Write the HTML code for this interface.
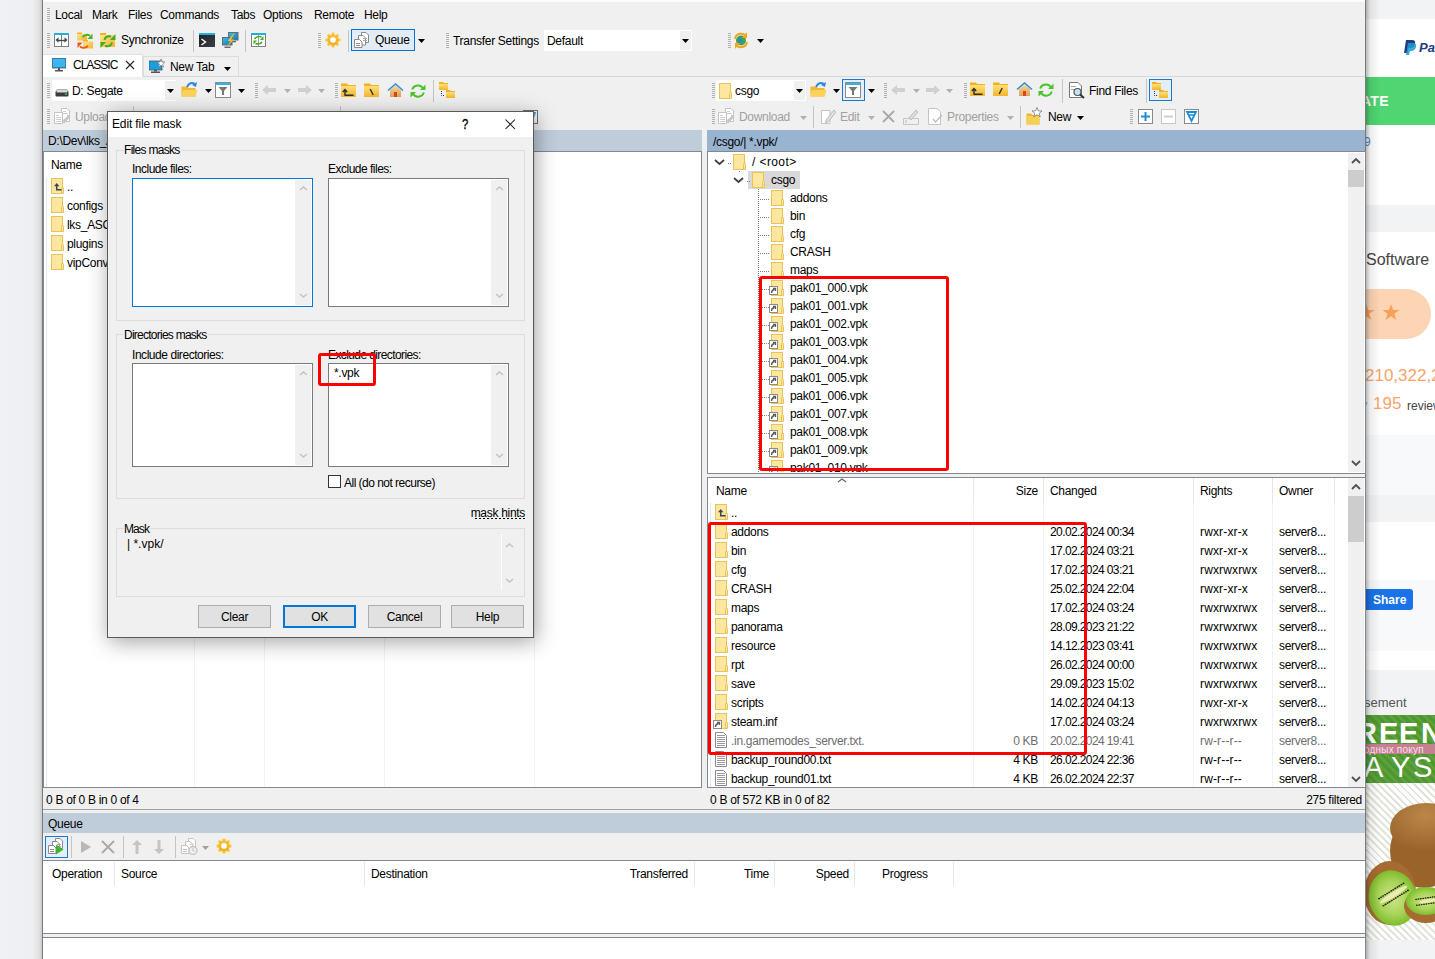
<!DOCTYPE html><html><head><meta charset="utf-8"><style>
html,body{margin:0;padding:0;}
body{width:1435px;height:959px;overflow:hidden;position:relative;background:#f0f1f3;font-family:"Liberation Sans",sans-serif;font-size:12px;color:#000;}
div{position:absolute;box-sizing:border-box;}
.t{white-space:nowrap;line-height:14px;letter-spacing:-0.3px;}
</style></head><body>
<div style="left:0px;top:0px;width:43px;height:959px;background:linear-gradient(to right,#eff1f4 0px,#edeff2 32px,#e0e1e3 39px,#c9c9ca 42px)"></div>
<div style="left:1366px;top:0px;width:69px;height:959px;background:#fff"></div>
<div style="left:1366px;top:0px;width:69px;height:19px;background:#f1f3f4"></div>
<div style="left:1366px;top:77px;width:69px;height:48px;background:#4fd571"></div>
<div class="t" style="left:1361px;top:94px;font-size:14px;color:#fff;font-weight:bold;letter-spacing:0.3px">ATE</div>
<svg style="position:absolute;left:1403px;top:38px;" width="32" height="18" viewBox="0 0 32 18"><path d="M3 2 H9 Q13 2 12 6 Q11 10 7 10 H5.5 L4.5 15 H1 Z" fill="#253b80"/><path d="M5 5 H10 Q14 5 13 9 Q12 13 8 13 H7 L6 17 H3 Z" fill="#179bd7" opacity="0.85"/><text x="16" y="14" font-family="Liberation Sans" font-weight="bold" font-style="italic" font-size="13" fill="#253b80">Pa</text></svg>
<div class="t" style="left:1364px;top:135px;font-size:12px;color:#4a7fd0">9</div>
<div style="left:1366px;top:205px;width:69px;height:27px;background:#f1f3f4"></div>
<div class="t" style="left:1366px;top:253px;font-size:16px;color:#444;letter-spacing:0">Software</div>
<div style="left:1330px;top:289px;width:101px;height:50px;background:#fdd5b5;border-radius:25px"></div>
<svg style="position:absolute;left:1358px;top:302px;" width="50" height="22" viewBox="0 0 50 22"><path d="M8 2 L10.2 8 H16.5 L11.4 11.8 L13.3 18 L8 14.2 L2.7 18 L4.6 11.8 L-0.5 8 H5.8 Z" fill="#f6a05a"/><path d="M33 2 L35.2 8 H41.5 L36.4 11.8 L38.3 18 L33 14.2 L27.7 18 L29.6 11.8 L24.5 8 H30.8 Z" fill="#f6a05a"/></svg>
<div class="t" style="left:1365px;top:369px;font-size:17px;color:#f5a46b;letter-spacing:0">210,322,2</div>
<div class="t" style="left:1365px;top:400px;font-size:12px;color:#999">&#8217;</div>
<div class="t" style="left:1373px;top:397px;font-size:17px;color:#f5a46b;letter-spacing:0">195</div>
<div class="t" style="left:1407px;top:399px;font-size:12px;color:#444;letter-spacing:0">review</div>
<div style="left:1366px;top:435px;width:69px;height:60px;background:#f8f9fa"></div>
<div style="left:1366px;top:495px;width:69px;height:27px;background:#f1f3f4"></div>
<div style="left:1366px;top:580px;width:69px;height:71px;background:#f8f9fa"></div>
<div style="left:1350px;top:589px;width:63px;height:21px;background:#1a73e8;border-radius:3px"></div>
<div class="t" style="left:1373px;top:593px;font-size:12px;color:#fff;font-weight:bold;letter-spacing:0">Share</div>
<div style="left:1366px;top:670px;width:69px;height:289px;background:#f1f3f4"></div>
<div class="t" style="left:1364px;top:696px;font-size:13px;color:#555;letter-spacing:0">sement</div>
<div style="left:1366px;top:715px;width:69px;height:68px;background:repeating-linear-gradient(45deg,#4f9630 0 3px,#5aa23a 3px 6px)"></div>
<div class="t" style="left:1356px;top:726px;font-size:29px;color:#fff;font-weight:bold;letter-spacing:0">R</div>
<div class="t" style="left:1379px;top:726px;font-size:29px;color:#fff;font-weight:bold;letter-spacing:0">E</div>
<div class="t" style="left:1399px;top:726px;font-size:29px;color:#fff;font-weight:bold;letter-spacing:0">E</div>
<div class="t" style="left:1421px;top:726px;font-size:29px;color:#fff;font-weight:bold;letter-spacing:0">N</div>
<div style="left:1366px;top:744px;width:69px;height:10px;background:#c97f93"></div>
<div class="t" style="left:1364px;top:743px;font-size:10px;color:#f6e3ea;letter-spacing:0.2px">одных покуп</div>
<div class="t" style="left:1364px;top:760px;font-size:29px;color:#fff;letter-spacing:0">A</div>
<div class="t" style="left:1391px;top:760px;font-size:29px;color:#fff;letter-spacing:0">Y</div>
<div class="t" style="left:1413px;top:760px;font-size:29px;color:#fff;letter-spacing:0">S</div>
<div style="left:1366px;top:783px;width:69px;height:157px;background:repeating-linear-gradient(45deg,#ffffff 0 3px,#e2e6da 3px 5px)"></div>
<svg style="position:absolute;left:1366px;top:783px;" width="69" height="157" viewBox="0 0 69 157"><defs><radialGradient id="kg" cx="0.5" cy="0.25" r="0.75"><stop offset="0" stop-color="#bb8748"/><stop offset="1" stop-color="#97622a"/></radialGradient><radialGradient id="kf" cx="0.5" cy="0.5" r="0.5"><stop offset="0" stop-color="#cfe58c"/><stop offset="0.6" stop-color="#a8d458"/><stop offset="1" stop-color="#7dbd2c"/></radialGradient></defs><ellipse cx="58" cy="68" rx="34" ry="37" fill="#9a6329"/><ellipse cx="60" cy="45" rx="36" ry="25" fill="url(#kg)"/><ellipse cx="24" cy="110" rx="26" ry="32" fill="#a56b31"/><ellipse cx="27" cy="115" rx="24" ry="28" transform="rotate(-15 27 115)" fill="url(#kf)"/><ellipse cx="13.1" cy="115.6" rx="1.1" ry="0.8" fill="#1e2410"/><ellipse cx="17.5" cy="122.7" rx="1.1" ry="0.8" fill="#1e2410"/><ellipse cx="15.1" cy="114.3" rx="1.1" ry="0.8" fill="#1e2410"/><ellipse cx="19.5" cy="121.4" rx="1.1" ry="0.8" fill="#1e2410"/><ellipse cx="17.1" cy="113.0" rx="1.1" ry="0.8" fill="#1e2410"/><ellipse cx="21.6" cy="120.1" rx="1.1" ry="0.8" fill="#1e2410"/><ellipse cx="19.2" cy="111.8" rx="1.1" ry="0.8" fill="#1e2410"/><ellipse cx="23.6" cy="118.9" rx="1.1" ry="0.8" fill="#1e2410"/><ellipse cx="21.2" cy="110.5" rx="1.1" ry="0.8" fill="#1e2410"/><ellipse cx="25.7" cy="117.6" rx="1.1" ry="0.8" fill="#1e2410"/><ellipse cx="23.2" cy="109.2" rx="1.1" ry="0.8" fill="#1e2410"/><ellipse cx="27.7" cy="116.3" rx="1.1" ry="0.8" fill="#1e2410"/><ellipse cx="25.3" cy="107.9" rx="1.1" ry="0.8" fill="#1e2410"/><ellipse cx="29.7" cy="115.1" rx="1.1" ry="0.8" fill="#1e2410"/><ellipse cx="27.3" cy="106.7" rx="1.1" ry="0.8" fill="#1e2410"/><ellipse cx="31.8" cy="113.8" rx="1.1" ry="0.8" fill="#1e2410"/><ellipse cx="29.3" cy="105.4" rx="1.1" ry="0.8" fill="#1e2410"/><ellipse cx="33.8" cy="112.5" rx="1.1" ry="0.8" fill="#1e2410"/><ellipse cx="31.4" cy="104.1" rx="1.1" ry="0.8" fill="#1e2410"/><ellipse cx="35.8" cy="111.2" rx="1.1" ry="0.8" fill="#1e2410"/><ellipse cx="33.4" cy="102.9" rx="1.1" ry="0.8" fill="#1e2410"/><ellipse cx="37.9" cy="110.0" rx="1.1" ry="0.8" fill="#1e2410"/><ellipse cx="35.5" cy="101.6" rx="1.1" ry="0.8" fill="#1e2410"/><ellipse cx="39.9" cy="108.7" rx="1.1" ry="0.8" fill="#1e2410"/><ellipse cx="37.5" cy="100.3" rx="1.1" ry="0.8" fill="#1e2410"/><ellipse cx="41.9" cy="107.4" rx="1.1" ry="0.8" fill="#1e2410"/><ellipse cx="27.5" cy="111.5" rx="16" ry="2.4" transform="rotate(-32 27.5 111.5)" fill="#ecebb2"/><ellipse cx="60" cy="123" rx="22" ry="17" fill="#a56b31"/><ellipse cx="60" cy="118" rx="20" ry="14" fill="url(#kf)"/><ellipse cx="50.1" cy="116.4" rx="1" ry="0.7" fill="#1e2410"/><ellipse cx="50.9" cy="122.3" rx="1" ry="0.7" fill="#1e2410"/><ellipse cx="52.5" cy="116.0" rx="1" ry="0.7" fill="#1e2410"/><ellipse cx="53.3" cy="122.0" rx="1" ry="0.7" fill="#1e2410"/><ellipse cx="54.8" cy="115.7" rx="1" ry="0.7" fill="#1e2410"/><ellipse cx="55.7" cy="121.6" rx="1" ry="0.7" fill="#1e2410"/><ellipse cx="57.2" cy="115.4" rx="1" ry="0.7" fill="#1e2410"/><ellipse cx="58.0" cy="121.3" rx="1" ry="0.7" fill="#1e2410"/><ellipse cx="59.6" cy="115.0" rx="1" ry="0.7" fill="#1e2410"/><ellipse cx="60.4" cy="121.0" rx="1" ry="0.7" fill="#1e2410"/><ellipse cx="62.0" cy="114.7" rx="1" ry="0.7" fill="#1e2410"/><ellipse cx="62.8" cy="120.6" rx="1" ry="0.7" fill="#1e2410"/><ellipse cx="64.3" cy="114.4" rx="1" ry="0.7" fill="#1e2410"/><ellipse cx="65.2" cy="120.3" rx="1" ry="0.7" fill="#1e2410"/><ellipse cx="66.7" cy="114.0" rx="1" ry="0.7" fill="#1e2410"/><ellipse cx="67.5" cy="120.0" rx="1" ry="0.7" fill="#1e2410"/><ellipse cx="69.1" cy="113.7" rx="1" ry="0.7" fill="#1e2410"/><ellipse cx="69.9" cy="119.6" rx="1" ry="0.7" fill="#1e2410"/><ellipse cx="62" cy="118" rx="9" ry="1.8" transform="rotate(-8 62 118)" fill="#ecebb2"/></svg>
<div style="left:1366px;top:0px;width:14px;height:959px;background:linear-gradient(to right,rgba(0,0,0,0.28),rgba(0,0,0,0.08) 4px,rgba(0,0,0,0) 14px)"></div>
<div style="left:42px;top:0px;width:1324px;height:959px;background:#f0f0f0;border-left:1px solid #7a7a7a;border-right:1px solid #7a7a7a"></div>
<div style="left:43px;top:0px;width:1322px;height:2px;background:#fcfcfc"></div>
<svg style="position:absolute;left:47px;top:8px;" width="3" height="13" viewBox="0 0 3 13"><rect x="0" y="0" width="3" height="1" fill="#b0b0b0"/><rect x="0" y="2" width="3" height="1" fill="#b0b0b0"/><rect x="0" y="4" width="3" height="1" fill="#b0b0b0"/><rect x="0" y="6" width="3" height="1" fill="#b0b0b0"/><rect x="0" y="8" width="3" height="1" fill="#b0b0b0"/><rect x="0" y="10" width="3" height="1" fill="#b0b0b0"/><rect x="0" y="12" width="3" height="1" fill="#b0b0b0"/></svg>
<div class="t" style="left:55px;top:8px;font-size:12px;">Local</div>
<div class="t" style="left:92px;top:8px;font-size:12px;">Mark</div>
<div class="t" style="left:128px;top:8px;font-size:12px;">Files</div>
<div class="t" style="left:160px;top:8px;font-size:12px;">Commands</div>
<div class="t" style="left:231px;top:8px;font-size:12px;">Tabs</div>
<div class="t" style="left:263px;top:8px;font-size:12px;">Options</div>
<div class="t" style="left:314px;top:8px;font-size:12px;">Remote</div>
<div class="t" style="left:364px;top:8px;font-size:12px;">Help</div>
<svg style="position:absolute;left:47px;top:33px;" width="3" height="15" viewBox="0 0 3 15"><rect x="0" y="0" width="3" height="1" fill="#b0b0b0"/><rect x="0" y="2" width="3" height="1" fill="#b0b0b0"/><rect x="0" y="4" width="3" height="1" fill="#b0b0b0"/><rect x="0" y="6" width="3" height="1" fill="#b0b0b0"/><rect x="0" y="8" width="3" height="1" fill="#b0b0b0"/><rect x="0" y="10" width="3" height="1" fill="#b0b0b0"/><rect x="0" y="12" width="3" height="1" fill="#b0b0b0"/><rect x="0" y="14" width="3" height="1" fill="#b0b0b0"/></svg>
<svg style="position:absolute;left:54px;top:33px;" width="15" height="14" viewBox="0 0 15 14"><rect x="0.5" y="0.5" width="14" height="13" fill="#fff" stroke="#808080"/><rect x="0" y="0" width="15" height="2" fill="#1fb0de"/><line x1="7.5" y1="2" x2="7.5" y2="13" stroke="#808080"/><path d="M1.5 7 L4.5 4.3 V9.7 Z M13.5 7 L10.5 4.3 V9.7 Z" fill="#3f4850"/><line x1="4" y1="7.5" x2="11" y2="7.5" stroke="#3f4850" stroke-width="1.4"/></svg>
<svg style="position:absolute;left:77px;top:32px;" width="16" height="17" viewBox="0 0 16 17"><defs><linearGradient id="sf" x1="0" y1="0" x2="1" y2="1"><stop offset="0" stop-color="#fde49a"/><stop offset="1" stop-color="#f3b42a"/></linearGradient></defs><rect x="0" y="0.5" width="5" height="2" fill="#f5b519"/><rect x="0" y="2" width="10" height="6.5" fill="url(#sf)"/><rect x="6" y="8" width="5" height="2" fill="#f5b519"/><rect x="6" y="9.5" width="10" height="7" fill="url(#sf)"/><path d="M5.5 5 Q9 1.5 13 3.5" stroke="#4bb021" stroke-width="1.8" fill="none"/><path d="M15.5 1.5 V7 H10.5 Z" fill="#4bb021"/><path d="M11 14 Q7 17.5 3 14.5" stroke="#e8571c" stroke-width="1.8" fill="none"/><path d="M0.5 16 V10.5 H5.5 Z" fill="#e8571c"/></svg>
<svg style="position:absolute;left:100px;top:32px;" width="16" height="17" viewBox="0 0 16 17"><defs><linearGradient id="sy" x1="0" y1="0" x2="1" y2="1"><stop offset="0" stop-color="#fde49a"/><stop offset="1" stop-color="#f3b42a"/></linearGradient></defs><rect x="0" y="1" width="6" height="2" fill="#f5b519"/><rect x="0" y="3" width="15" height="12" fill="url(#sy)"/><path d="M4.5 8 Q5.5 3.5 11 4.5" stroke="#47ad1d" stroke-width="2" fill="none"/><path d="M15.5 2 V8 H10 Z" fill="#47ad1d"/><path d="M12 10.5 Q11 15 5 14" stroke="#47ad1d" stroke-width="2" fill="none"/><path d="M0.5 16 V10 H6 Z" fill="#47ad1d"/></svg>
<div class="t" style="left:121px;top:33px;font-size:12px;">Synchronize</div>
<div style="left:193px;top:30px;width:1px;height:22px;background:#c4c4c4"></div>
<svg style="position:absolute;left:199px;top:33px;" width="16" height="14" viewBox="0 0 16 14"><defs><linearGradient id="tg" x1="0" y1="0" x2="1" y2="1"><stop offset="0" stop-color="#1d1f22"/><stop offset="1" stop-color="#3c4046"/></linearGradient></defs><rect x="0" y="0" width="16" height="14" fill="url(#tg)"/><rect x="0" y="0" width="16" height="2" fill="#1fb0de"/><path d="M2.5 6 L6.5 9 L2.5 12" stroke="#fff" stroke-width="1.4" fill="none"/></svg>
<svg style="position:absolute;left:222px;top:32px;" width="17" height="17" viewBox="0 0 17 17"><defs><linearGradient id="pg" x1="0" y1="0" x2="1" y2="1"><stop offset="0" stop-color="#2fc0ee"/><stop offset="1" stop-color="#1577c2"/></linearGradient></defs><rect x="6.5" y="0.5" width="9.5" height="7.5" fill="url(#pg)" stroke="#6a6a6a"/><rect x="9" y="9" width="5" height="1.3" fill="#6a6a6a"/><rect x="0.5" y="5.5" width="9.5" height="7.5" fill="url(#pg)" stroke="#6a6a6a"/><rect x="2.5" y="14.5" width="6" height="1.5" fill="#6a6a6a"/><path d="M11.5 1.5 L5.5 9 H8.5 L4.5 15.5 L12 7.5 H9 L12.5 1.5 Z" fill="#f9be2c"/></svg>
<div style="left:245px;top:30px;width:1px;height:22px;background:#c4c4c4"></div>
<svg style="position:absolute;left:251px;top:33px;" width="15" height="14" viewBox="0 0 15 14"><rect x="0.5" y="0.5" width="14" height="13" fill="#fff" stroke="#808080"/><rect x="0" y="0" width="15" height="2" fill="#1fb0de"/><line x1="7.5" y1="2" x2="7.5" y2="13" stroke="#a0a0a0"/><path d="M3.5 6 Q6 2.5 10.5 4" stroke="#43ad1f" stroke-width="1.5" fill="none"/><path d="M12.5 3 V7 H9 Z" fill="#43ad1f"/><path d="M11 9 Q9 12 4.5 10.5" stroke="#43ad1f" stroke-width="1.5" fill="none"/><path d="M2.5 11.5 V7.5 H6 Z" fill="#43ad1f"/></svg>
<svg style="position:absolute;left:318px;top:33px;" width="3" height="15" viewBox="0 0 3 15"><rect x="0" y="0" width="3" height="1" fill="#b0b0b0"/><rect x="0" y="2" width="3" height="1" fill="#b0b0b0"/><rect x="0" y="4" width="3" height="1" fill="#b0b0b0"/><rect x="0" y="6" width="3" height="1" fill="#b0b0b0"/><rect x="0" y="8" width="3" height="1" fill="#b0b0b0"/><rect x="0" y="10" width="3" height="1" fill="#b0b0b0"/><rect x="0" y="12" width="3" height="1" fill="#b0b0b0"/><rect x="0" y="14" width="3" height="1" fill="#b0b0b0"/></svg>
<svg style="position:absolute;left:325px;top:32px;" width="16" height="16" viewBox="0 0 16 16"><defs><linearGradient id="gg" x1="0" y1="0" x2="0" y2="1"><stop offset="0" stop-color="#fcd45a"/><stop offset="1" stop-color="#eeaa1c"/></linearGradient></defs><g fill="url(#gg)"><circle cx="8" cy="8" r="5.6"/><rect x="6.5" y="0.3" width="3" height="4" rx="1" transform="rotate(0 8 8)"/><rect x="6.5" y="0.3" width="3" height="4" rx="1" transform="rotate(45 8 8)"/><rect x="6.5" y="0.3" width="3" height="4" rx="1" transform="rotate(90 8 8)"/><rect x="6.5" y="0.3" width="3" height="4" rx="1" transform="rotate(135 8 8)"/><rect x="6.5" y="0.3" width="3" height="4" rx="1" transform="rotate(180 8 8)"/><rect x="6.5" y="0.3" width="3" height="4" rx="1" transform="rotate(225 8 8)"/><rect x="6.5" y="0.3" width="3" height="4" rx="1" transform="rotate(270 8 8)"/><rect x="6.5" y="0.3" width="3" height="4" rx="1" transform="rotate(315 8 8)"/></g><circle cx="8" cy="8" r="2.8" fill="#fff"/></svg>
<div style="left:348px;top:30px;width:1px;height:22px;background:#c4c4c4"></div>
<div style="left:351px;top:29px;width:64px;height:22px;background:#e1ecf7;border:1px solid #0a74d0"></div>
<svg style="position:absolute;left:354px;top:32px;" width="15" height="16" viewBox="0 0 15 16"><path d="M7.5 0.5 H12 L14.5 3 V10.5 H7.5 Z" fill="#fff" stroke="#8a8a8a"/><path d="M4.5 3.5 H9 L11.5 6 V13 H4.5 Z" fill="#fff" stroke="#8a8a8a"/><path d="M0.5 7.5 H5.5 L8 10 V15.5 H0.5 Z" fill="#fff" stroke="#8a8a8a"/><line x1="2" y1="11.5" x2="6" y2="11.5" stroke="#8a8a8a"/><line x1="2" y1="13.5" x2="6" y2="13.5" stroke="#8a8a8a"/><line x1="9" y1="6.5" x2="13" y2="6.5" stroke="#aaa"/><line x1="9" y1="8.5" x2="13" y2="8.5" stroke="#aaa"/></svg>
<div class="t" style="left:375px;top:33px;font-size:12px;">Queue</div>
<svg style="position:absolute;left:418px;top:39px;" width="7" height="4" viewBox="0 0 7 4"><path d="M0 0 H7 L3.5 4 Z" fill="#000"/></svg>
<svg style="position:absolute;left:446px;top:33px;" width="3" height="15" viewBox="0 0 3 15"><rect x="0" y="0" width="3" height="1" fill="#b0b0b0"/><rect x="0" y="2" width="3" height="1" fill="#b0b0b0"/><rect x="0" y="4" width="3" height="1" fill="#b0b0b0"/><rect x="0" y="6" width="3" height="1" fill="#b0b0b0"/><rect x="0" y="8" width="3" height="1" fill="#b0b0b0"/><rect x="0" y="10" width="3" height="1" fill="#b0b0b0"/><rect x="0" y="12" width="3" height="1" fill="#b0b0b0"/><rect x="0" y="14" width="3" height="1" fill="#b0b0b0"/></svg>
<div class="t" style="left:453px;top:34px;font-size:12px;">Transfer Settings</div>
<div style="left:544px;top:30px;width:148px;height:21px;background:#fff"></div>
<div style="left:680px;top:31px;width:11px;height:19px;background:#f0f0f0"></div>
<div class="t" style="left:547px;top:34px;font-size:12px;">Default</div>
<svg style="position:absolute;left:682px;top:39px;" width="7" height="4" viewBox="0 0 7 4"><path d="M0 0 H7 L3.5 4 Z" fill="#000"/></svg>
<svg style="position:absolute;left:728px;top:33px;" width="3" height="15" viewBox="0 0 3 15"><rect x="0" y="0" width="3" height="1" fill="#b0b0b0"/><rect x="0" y="2" width="3" height="1" fill="#b0b0b0"/><rect x="0" y="4" width="3" height="1" fill="#b0b0b0"/><rect x="0" y="6" width="3" height="1" fill="#b0b0b0"/><rect x="0" y="8" width="3" height="1" fill="#b0b0b0"/><rect x="0" y="10" width="3" height="1" fill="#b0b0b0"/><rect x="0" y="12" width="3" height="1" fill="#b0b0b0"/><rect x="0" y="14" width="3" height="1" fill="#b0b0b0"/></svg>
<svg style="position:absolute;left:733px;top:32px;" width="16" height="17" viewBox="0 0 16 17"><circle cx="8" cy="8.5" r="5" fill="#3aa55a"/><path d="M5 6 Q7 5 8 7 Q10 9 8 11 Q6 11 5 9 Z" fill="#2f7ed8" opacity="0.8"/><path d="M2 7 Q3 1 10 2 L12 3" stroke="#f3a617" stroke-width="2" fill="none"/><path d="M14 0 V6 H9 Z" fill="#f3a617"/><path d="M14 10 Q13 16 6 15 L4 14" stroke="#f3a617" stroke-width="2" fill="none"/><path d="M2 17 V11 H7 Z" fill="#f3a617"/></svg>
<svg style="position:absolute;left:757px;top:39px;" width="7" height="4" viewBox="0 0 7 4"><path d="M0 0 H7 L3.5 4 Z" fill="#000"/></svg>
<div style="left:43px;top:54px;width:100px;height:23px;background:#fff;border-top:1px solid #e0e0e0;border-right:1px solid #e0e0e0"></div>
<svg style="position:absolute;left:52px;top:58px;" width="14" height="14" viewBox="0 0 14 14"><rect x="0" y="0" width="14" height="10" fill="#1a9ee2" stroke="#555" stroke-width="0.8"/><rect x="1" y="1" width="12" height="8" fill="#3fb5ef"/><rect x="6" y="10" width="2" height="2" fill="#555"/><rect x="3" y="12" width="8" height="1.5" fill="#555"/></svg>
<div class="t" style="left:73px;top:58px;font-size:12px;letter-spacing:-1px">CLASSIC</div>
<svg style="position:absolute;left:125px;top:60px;" width="10" height="10" viewBox="0 0 10 10"><path d="M1 1 L9 9 M9 1 L1 9" stroke="#222" stroke-width="1.1"/></svg>
<div style="left:143px;top:56px;width:96px;height:21px;background:#f0f0f0;border:1px solid #dcdcdc;border-bottom:none"></div>
<svg style="position:absolute;left:149px;top:59px;" width="16" height="14" viewBox="0 0 16 14"><rect x="0" y="2" width="13" height="9" fill="#1a9ee2" stroke="#555" stroke-width="0.8"/><rect x="5" y="11" width="3" height="1.5" fill="#555"/><rect x="2" y="12.5" width="9" height="1.5" fill="#555"/><path d="M12 0 L13 3 L16 3 L13.6 5 L14.6 8 L12 6.3 L9.4 8 L10.4 5 L8 3 L11 3 Z" fill="#fff" stroke="#777" stroke-width="0.7"/></svg>
<div class="t" style="left:170px;top:60px;font-size:12px;">New Tab</div>
<svg style="position:absolute;left:224px;top:67px;" width="7" height="4" viewBox="0 0 7 4"><path d="M0 0 H7 L3.5 4 Z" fill="#000"/></svg>
<div style="left:143px;top:76px;width:1222px;height:1px;background:#d6d6d6"></div>
<svg style="position:absolute;left:47px;top:83px;" width="3" height="15" viewBox="0 0 3 15"><rect x="0" y="0" width="3" height="1" fill="#b0b0b0"/><rect x="0" y="2" width="3" height="1" fill="#b0b0b0"/><rect x="0" y="4" width="3" height="1" fill="#b0b0b0"/><rect x="0" y="6" width="3" height="1" fill="#b0b0b0"/><rect x="0" y="8" width="3" height="1" fill="#b0b0b0"/><rect x="0" y="10" width="3" height="1" fill="#b0b0b0"/><rect x="0" y="12" width="3" height="1" fill="#b0b0b0"/><rect x="0" y="14" width="3" height="1" fill="#b0b0b0"/></svg>
<div style="left:52px;top:80px;width:124px;height:21px;background:#fff"></div>
<div style="left:165px;top:81px;width:11px;height:19px;background:#f0f0f0"></div>
<svg style="position:absolute;left:55px;top:89px;" width="14" height="8" viewBox="0 0 14 8"><rect x="0.5" y="2" width="13" height="5.5" rx="1" fill="#3b3b3b"/><rect x="1.5" y="0.5" width="11" height="3" rx="1" fill="#d8d8d8" stroke="#888" stroke-width="0.6"/><rect x="10" y="4.5" width="2" height="1.3" fill="#3ed36b"/></svg>
<div class="t" style="left:72px;top:84px;font-size:12px;">D: Segate</div>
<svg style="position:absolute;left:167px;top:89px;" width="7" height="4" viewBox="0 0 7 4"><path d="M0 0 H7 L3.5 4 Z" fill="#000"/></svg>
<svg style="position:absolute;left:181px;top:81px;" width="17" height="17" viewBox="0 0 17 17"><path d="M0.5 5.5 H6 L7.5 7 H14.5 V15.5 H0.5 Z" fill="#f2b632"/><path d="M2 9 H16.5 L14.5 15.5 H0.5 Z" fill="#f9d35c"/><path d="M6 6 Q9 0 14 3" stroke="#2a8ad6" stroke-width="2" fill="none"/><path d="M16 1 L15 6 L11 4 Z" fill="#2a8ad6"/></svg>
<svg style="position:absolute;left:205px;top:89px;" width="7" height="4" viewBox="0 0 7 4"><path d="M0 0 H7 L3.5 4 Z" fill="#000"/></svg>
<svg style="position:absolute;left:215px;top:82px;" width="17" height="16" viewBox="0 0 17 16"><rect x="0.5" y="0.5" width="15" height="15" fill="#fff" stroke="#8a8a8a"/><rect x="1" y="1" width="14" height="2" fill="#29b6e8"/><path d="M3.5 5 H12.5 L9 9 V13 L7 13 V9 Z" fill="#777"/></svg>
<svg style="position:absolute;left:238px;top:89px;" width="7" height="4" viewBox="0 0 7 4"><path d="M0 0 H7 L3.5 4 Z" fill="#000"/></svg>
<svg style="position:absolute;left:255px;top:83px;" width="3" height="15" viewBox="0 0 3 15"><rect x="0" y="0" width="3" height="1" fill="#b0b0b0"/><rect x="0" y="2" width="3" height="1" fill="#b0b0b0"/><rect x="0" y="4" width="3" height="1" fill="#b0b0b0"/><rect x="0" y="6" width="3" height="1" fill="#b0b0b0"/><rect x="0" y="8" width="3" height="1" fill="#b0b0b0"/><rect x="0" y="10" width="3" height="1" fill="#b0b0b0"/><rect x="0" y="12" width="3" height="1" fill="#b0b0b0"/><rect x="0" y="14" width="3" height="1" fill="#b0b0b0"/></svg>
<svg style="position:absolute;left:262px;top:84px;" width="15" height="12" viewBox="0 0 15 12"><path d="M0 6 L6 1 V4 H14 V8 H6 V11 Z" fill="#d0d0d0"/></svg>
<svg style="position:absolute;left:284px;top:89px;" width="7" height="4" viewBox="0 0 7 4"><path d="M0 0 H7 L3.5 4 Z" fill="#b0b0b0"/></svg>
<svg style="position:absolute;left:297px;top:84px;" width="15" height="12" viewBox="0 0 15 12"><path d="M15 6 L9 1 V4 H1 V8 H9 V11 Z" fill="#d0d0d0"/></svg>
<svg style="position:absolute;left:318px;top:89px;" width="7" height="4" viewBox="0 0 7 4"><path d="M0 0 H7 L3.5 4 Z" fill="#b0b0b0"/></svg>
<svg style="position:absolute;left:335px;top:83px;" width="3" height="15" viewBox="0 0 3 15"><rect x="0" y="0" width="3" height="1" fill="#b0b0b0"/><rect x="0" y="2" width="3" height="1" fill="#b0b0b0"/><rect x="0" y="4" width="3" height="1" fill="#b0b0b0"/><rect x="0" y="6" width="3" height="1" fill="#b0b0b0"/><rect x="0" y="8" width="3" height="1" fill="#b0b0b0"/><rect x="0" y="10" width="3" height="1" fill="#b0b0b0"/><rect x="0" y="12" width="3" height="1" fill="#b0b0b0"/><rect x="0" y="14" width="3" height="1" fill="#b0b0b0"/></svg>
<svg style="position:absolute;left:341px;top:83px;" width="16" height="15" viewBox="0 0 16 15"><defs><linearGradient id="fg1" x1="0" y1="0" x2="0" y2="1"><stop offset="0" stop-color="#fde07a"/><stop offset="1" stop-color="#f3b52c"/></linearGradient></defs><path d="M0 0.5 H6 L7 2 H15 V14 H0 Z" fill="#f2b11f"/><rect x="0" y="3" width="15" height="11" fill="url(#fg1)"/><path d="M4 12.5 V7 M1.8 9 L4 6.5 L6.2 9 M3.5 12.3 H12.5" stroke="#2d2d2d" stroke-width="1.4" fill="none"/></svg>
<svg style="position:absolute;left:364px;top:83px;" width="16" height="15" viewBox="0 0 16 15"><defs><linearGradient id="fg2" x1="0" y1="0" x2="0" y2="1"><stop offset="0" stop-color="#fde07a"/><stop offset="1" stop-color="#f3b52c"/></linearGradient></defs><path d="M0 0.5 H6 L7 2 H15 V14 H0 Z" fill="#f2b11f"/><rect x="0" y="3" width="15" height="11" fill="url(#fg2)"/><path d="M6.2 6 L9.2 12" stroke="#2d2d2d" stroke-width="1.4"/></svg>
<svg style="position:absolute;left:387px;top:83px;" width="17" height="15" viewBox="0 0 17 15"><defs><linearGradient id="hg" x1="0" y1="0" x2="0" y2="1"><stop offset="0" stop-color="#f6d49a"/><stop offset="1" stop-color="#d9a45a"/></linearGradient></defs><path d="M3 7 L8.5 2.5 L14 7 V14 H3 Z" fill="url(#hg)"/><path d="M1 7.5 L8.5 1 L16 7.5" stroke="#3a8fd0" stroke-width="1.6" fill="none"/><rect x="7" y="9" width="3" height="5" fill="#e0401a"/></svg>
<svg style="position:absolute;left:410px;top:83px;" width="16" height="16" viewBox="0 0 16 16"><path d="M13 5.5 A6 6 0 0 0 2.2 6.5 M2.8 10.5 A6 6 0 0 0 13.8 9.5" stroke="#4cc22c" stroke-width="2" fill="none"/><path d="M15.5 1.5 V7 H10 Z M0.5 14.5 V9 H6 Z" fill="#4cc22c"/></svg>
<div style="left:433px;top:80px;width:1px;height:22px;background:#c4c4c4"></div>
<svg style="position:absolute;left:439px;top:82px;" width="17" height="16" viewBox="0 0 17 16"><defs><linearGradient id="fg3" x1="0" y1="0" x2="0" y2="1"><stop offset="0" stop-color="#fde07a"/><stop offset="1" stop-color="#f3b52c"/></linearGradient></defs><defs><linearGradient id="fg4" x1="0" y1="0" x2="0" y2="1"><stop offset="0" stop-color="#fde07a"/><stop offset="1" stop-color="#f3b52c"/></linearGradient></defs><path d="M0 0 H4 L5 1 H9 V8 H0 Z" fill="#f2b11f"/><rect x="0" y="2" width="9" height="6" fill="url(#fg3)"/><path d="M7 8 H11 L12 9 H16 V16 H7 Z" fill="#f2b11f"/><rect x="7" y="10" width="9" height="6" fill="url(#fg4)"/><path d="M2.5 9 V13.5 H6" stroke="#333" stroke-dasharray="1 1" fill="none"/></svg>
<svg style="position:absolute;left:712px;top:83px;" width="3" height="15" viewBox="0 0 3 15"><rect x="0" y="0" width="3" height="1" fill="#b0b0b0"/><rect x="0" y="2" width="3" height="1" fill="#b0b0b0"/><rect x="0" y="4" width="3" height="1" fill="#b0b0b0"/><rect x="0" y="6" width="3" height="1" fill="#b0b0b0"/><rect x="0" y="8" width="3" height="1" fill="#b0b0b0"/><rect x="0" y="10" width="3" height="1" fill="#b0b0b0"/><rect x="0" y="12" width="3" height="1" fill="#b0b0b0"/><rect x="0" y="14" width="3" height="1" fill="#b0b0b0"/></svg>
<div style="left:716px;top:80px;width:90px;height:21px;background:#fff"></div>
<div style="left:794px;top:81px;width:11px;height:19px;background:#f0f0f0"></div>
<svg style="position:absolute;left:719px;top:83px;" width="15" height="16" viewBox="0 0 15 16"><rect x="0.5" y="0.5" width="11" height="15" fill="#fde79f" stroke="#e8c35a"/><path d="M10.5 15.5 V10.5 Q10.5 9 11.5 9 Q12.5 9 12.5 10.5 V15.5 Z" fill="#fde79f" stroke="#e8c35a"/></svg>
<div class="t" style="left:735px;top:84px;font-size:12px;">csgo</div>
<svg style="position:absolute;left:796px;top:89px;" width="7" height="4" viewBox="0 0 7 4"><path d="M0 0 H7 L3.5 4 Z" fill="#000"/></svg>
<svg style="position:absolute;left:810px;top:81px;" width="17" height="17" viewBox="0 0 17 17"><path d="M0.5 5.5 H6 L7.5 7 H14.5 V15.5 H0.5 Z" fill="#f2b632"/><path d="M2 9 H16.5 L14.5 15.5 H0.5 Z" fill="#f9d35c"/><path d="M6 6 Q9 0 14 3" stroke="#2a8ad6" stroke-width="2" fill="none"/><path d="M16 1 L15 6 L11 4 Z" fill="#2a8ad6"/></svg>
<svg style="position:absolute;left:833px;top:89px;" width="7" height="4" viewBox="0 0 7 4"><path d="M0 0 H7 L3.5 4 Z" fill="#000"/></svg>
<div style="left:842px;top:79px;width:23px;height:22px;background:#e3eef9;border:1px solid #1979ca"></div>
<svg style="position:absolute;left:845px;top:82px;" width="17" height="16" viewBox="0 0 17 16"><rect x="0.5" y="0.5" width="15" height="15" fill="#fff" stroke="#8a8a8a"/><rect x="1" y="1" width="14" height="2" fill="#29b6e8"/><path d="M3.5 5 H12.5 L9 9 V13 L7 13 V9 Z" fill="#777"/></svg>
<svg style="position:absolute;left:868px;top:89px;" width="7" height="4" viewBox="0 0 7 4"><path d="M0 0 H7 L3.5 4 Z" fill="#000"/></svg>
<svg style="position:absolute;left:884px;top:83px;" width="3" height="15" viewBox="0 0 3 15"><rect x="0" y="0" width="3" height="1" fill="#b0b0b0"/><rect x="0" y="2" width="3" height="1" fill="#b0b0b0"/><rect x="0" y="4" width="3" height="1" fill="#b0b0b0"/><rect x="0" y="6" width="3" height="1" fill="#b0b0b0"/><rect x="0" y="8" width="3" height="1" fill="#b0b0b0"/><rect x="0" y="10" width="3" height="1" fill="#b0b0b0"/><rect x="0" y="12" width="3" height="1" fill="#b0b0b0"/><rect x="0" y="14" width="3" height="1" fill="#b0b0b0"/></svg>
<svg style="position:absolute;left:891px;top:84px;" width="15" height="12" viewBox="0 0 15 12"><path d="M0 6 L6 1 V4 H14 V8 H6 V11 Z" fill="#d0d0d0"/></svg>
<svg style="position:absolute;left:913px;top:89px;" width="7" height="4" viewBox="0 0 7 4"><path d="M0 0 H7 L3.5 4 Z" fill="#b0b0b0"/></svg>
<svg style="position:absolute;left:925px;top:84px;" width="15" height="12" viewBox="0 0 15 12"><path d="M15 6 L9 1 V4 H1 V8 H9 V11 Z" fill="#d0d0d0"/></svg>
<svg style="position:absolute;left:946px;top:89px;" width="7" height="4" viewBox="0 0 7 4"><path d="M0 0 H7 L3.5 4 Z" fill="#b0b0b0"/></svg>
<svg style="position:absolute;left:964px;top:83px;" width="3" height="15" viewBox="0 0 3 15"><rect x="0" y="0" width="3" height="1" fill="#b0b0b0"/><rect x="0" y="2" width="3" height="1" fill="#b0b0b0"/><rect x="0" y="4" width="3" height="1" fill="#b0b0b0"/><rect x="0" y="6" width="3" height="1" fill="#b0b0b0"/><rect x="0" y="8" width="3" height="1" fill="#b0b0b0"/><rect x="0" y="10" width="3" height="1" fill="#b0b0b0"/><rect x="0" y="12" width="3" height="1" fill="#b0b0b0"/><rect x="0" y="14" width="3" height="1" fill="#b0b0b0"/></svg>
<svg style="position:absolute;left:970px;top:82px;" width="16" height="15" viewBox="0 0 16 15"><defs><linearGradient id="fg5" x1="0" y1="0" x2="0" y2="1"><stop offset="0" stop-color="#fde07a"/><stop offset="1" stop-color="#f3b52c"/></linearGradient></defs><path d="M0 0.5 H6 L7 2 H15 V14 H0 Z" fill="#f2b11f"/><rect x="0" y="3" width="15" height="11" fill="url(#fg5)"/><path d="M4 12.5 V7 M1.8 9 L4 6.5 L6.2 9 M3.5 12.3 H12.5" stroke="#2d2d2d" stroke-width="1.4" fill="none"/></svg>
<svg style="position:absolute;left:993px;top:82px;" width="16" height="15" viewBox="0 0 16 15"><defs><linearGradient id="fg6" x1="0" y1="0" x2="0" y2="1"><stop offset="0" stop-color="#fde07a"/><stop offset="1" stop-color="#f3b52c"/></linearGradient></defs><path d="M0 0.5 H6 L7 2 H15 V14 H0 Z" fill="#f2b11f"/><rect x="0" y="3" width="15" height="11" fill="url(#fg6)"/><path d="M9.2 6 L6.2 12" stroke="#2d2d2d" stroke-width="1.4"/></svg>
<svg style="position:absolute;left:1016px;top:82px;" width="17" height="15" viewBox="0 0 17 15"><defs><linearGradient id="hg" x1="0" y1="0" x2="0" y2="1"><stop offset="0" stop-color="#f6d49a"/><stop offset="1" stop-color="#d9a45a"/></linearGradient></defs><path d="M3 7 L8.5 2.5 L14 7 V14 H3 Z" fill="url(#hg)"/><path d="M1 7.5 L8.5 1 L16 7.5" stroke="#3a8fd0" stroke-width="1.6" fill="none"/><rect x="7" y="9" width="3" height="5" fill="#e0401a"/></svg>
<svg style="position:absolute;left:1038px;top:82px;" width="16" height="16" viewBox="0 0 16 16"><path d="M13 5.5 A6 6 0 0 0 2.2 6.5 M2.8 10.5 A6 6 0 0 0 13.8 9.5" stroke="#4cc22c" stroke-width="2" fill="none"/><path d="M15.5 1.5 V7 H10 Z M0.5 14.5 V9 H6 Z" fill="#4cc22c"/></svg>
<div style="left:1062px;top:79px;width:1px;height:24px;background:#c4c4c4"></div>
<svg style="position:absolute;left:1069px;top:82px;" width="17" height="17" viewBox="0 0 17 17"><path d="M0.5 0.5 H9 L12.5 4 V15.5 H0.5 Z" fill="#fff" stroke="#777"/><line x1="2" y1="4.5" x2="7" y2="4.5" stroke="#aaa"/><line x1="2" y1="7.5" x2="6" y2="7.5" stroke="#aaa"/><circle cx="8.5" cy="10" r="3.5" fill="#bfe6f7" stroke="#555" stroke-width="1.2"/><path d="M11 12.5 L15 16" stroke="#333" stroke-width="2"/></svg>
<div class="t" style="left:1089px;top:84px;font-size:12px;">Find Files</div>
<div style="left:1146px;top:79px;width:1px;height:24px;background:#c4c4c4"></div>
<div style="left:1149px;top:79px;width:23px;height:22px;background:#e3eef9;border:1px solid #1979ca"></div>
<svg style="position:absolute;left:1152px;top:82px;" width="17" height="16" viewBox="0 0 17 16"><defs><linearGradient id="fg7" x1="0" y1="0" x2="0" y2="1"><stop offset="0" stop-color="#fde07a"/><stop offset="1" stop-color="#f3b52c"/></linearGradient></defs><defs><linearGradient id="fg8" x1="0" y1="0" x2="0" y2="1"><stop offset="0" stop-color="#fde07a"/><stop offset="1" stop-color="#f3b52c"/></linearGradient></defs><path d="M0 0 H4 L5 1 H9 V8 H0 Z" fill="#f2b11f"/><rect x="0" y="2" width="9" height="6" fill="url(#fg7)"/><path d="M7 8 H11 L12 9 H16 V16 H7 Z" fill="#f2b11f"/><rect x="7" y="10" width="9" height="6" fill="url(#fg8)"/><path d="M2.5 9 V13.5 H6" stroke="#333" stroke-dasharray="1 1" fill="none"/></svg>
<svg style="position:absolute;left:47px;top:109px;" width="3" height="15" viewBox="0 0 3 15"><rect x="0" y="0" width="3" height="1" fill="#b0b0b0"/><rect x="0" y="2" width="3" height="1" fill="#b0b0b0"/><rect x="0" y="4" width="3" height="1" fill="#b0b0b0"/><rect x="0" y="6" width="3" height="1" fill="#b0b0b0"/><rect x="0" y="8" width="3" height="1" fill="#b0b0b0"/><rect x="0" y="10" width="3" height="1" fill="#b0b0b0"/><rect x="0" y="12" width="3" height="1" fill="#b0b0b0"/><rect x="0" y="14" width="3" height="1" fill="#b0b0b0"/></svg>
<svg style="position:absolute;left:54px;top:108px;" width="16" height="17" viewBox="0 0 16 17"><path d="M7.5 0.5 H13 L15.5 3 V13.5 H7.5 Z" fill="#fff" stroke="#c4c4c4"/><path d="M0.5 4.5 H8.5 V15.5 H0.5 Z" fill="#fff" stroke="#c4c4c4"/><line x1="9" y1="3.5" x2="12" y2="3.5" stroke="#d0d0d0"/><line x1="9" y1="5.5" x2="14" y2="5.5" stroke="#d0d0d0"/><line x1="2" y1="7.5" x2="5" y2="7.5" stroke="#d0d0d0"/><line x1="2" y1="9.5" x2="7" y2="9.5" stroke="#d0d0d0"/><line x1="2" y1="11.5" x2="7" y2="11.5" stroke="#d0d0d0"/><line x1="2" y1="13.5" x2="7" y2="13.5" stroke="#d0d0d0"/><path d="M8 13 L13 8.5 V7 H16 V11 H14.5 L10 15.5 Z" fill="#c8c8c8"/></svg>
<div class="t" style="left:75px;top:110px;font-size:12px;color:#a0a0a0">Upload</div>
<div style="left:133px;top:106px;width:1px;height:22px;background:#c4c4c4"></div>
<div style="left:340px;top:106px;width:1px;height:22px;background:#c4c4c4"></div>
<div style="left:523px;top:110px;width:15px;height:14px;background:#f4f4f4;border:1px solid #6e6e6e"></div>
<svg style="position:absolute;left:533px;top:112px;" width="3" height="6" viewBox="0 0 3 6"><path d="M1 0 H3 L1.5 6 Z" fill="#2a9ac8"/></svg>
<svg style="position:absolute;left:712px;top:109px;" width="3" height="15" viewBox="0 0 3 15"><rect x="0" y="0" width="3" height="1" fill="#b0b0b0"/><rect x="0" y="2" width="3" height="1" fill="#b0b0b0"/><rect x="0" y="4" width="3" height="1" fill="#b0b0b0"/><rect x="0" y="6" width="3" height="1" fill="#b0b0b0"/><rect x="0" y="8" width="3" height="1" fill="#b0b0b0"/><rect x="0" y="10" width="3" height="1" fill="#b0b0b0"/><rect x="0" y="12" width="3" height="1" fill="#b0b0b0"/><rect x="0" y="14" width="3" height="1" fill="#b0b0b0"/></svg>
<svg style="position:absolute;left:718px;top:108px;" width="16" height="17" viewBox="0 0 16 17"><path d="M7.5 0.5 H13 L15.5 3 V13.5 H7.5 Z" fill="#fff" stroke="#c4c4c4"/><path d="M0.5 4.5 H8.5 V15.5 H0.5 Z" fill="#fff" stroke="#c4c4c4"/><line x1="9" y1="3.5" x2="12" y2="3.5" stroke="#d0d0d0"/><line x1="9" y1="5.5" x2="14" y2="5.5" stroke="#d0d0d0"/><line x1="2" y1="7.5" x2="5" y2="7.5" stroke="#d0d0d0"/><line x1="2" y1="9.5" x2="7" y2="9.5" stroke="#d0d0d0"/><line x1="2" y1="11.5" x2="7" y2="11.5" stroke="#d0d0d0"/><line x1="2" y1="13.5" x2="7" y2="13.5" stroke="#d0d0d0"/><path d="M8 13 L13 8.5 V7 H16 V11 H14.5 L10 15.5 Z" fill="#c8c8c8"/></svg>
<div class="t" style="left:739px;top:110px;font-size:12px;color:#a0a0a0">Download</div>
<svg style="position:absolute;left:800px;top:116px;" width="7" height="4" viewBox="0 0 7 4"><path d="M0 0 H7 L3.5 4 Z" fill="#b0b0b0"/></svg>
<div style="left:813px;top:106px;width:1px;height:22px;background:#c4c4c4"></div>
<svg style="position:absolute;left:821px;top:108px;" width="15" height="17" viewBox="0 0 15 17"><path d="M0.5 2.5 H9 V15.5 H0.5 Z" fill="#fff" stroke="#c4c4c4"/><path d="M5 12 L13 2 L15 4 L7 14 L4.5 14.5 Z" fill="#e0e0e0" stroke="#bbb"/></svg>
<div class="t" style="left:840px;top:110px;font-size:12px;color:#a0a0a0">Edit</div>
<svg style="position:absolute;left:868px;top:116px;" width="7" height="4" viewBox="0 0 7 4"><path d="M0 0 H7 L3.5 4 Z" fill="#b0b0b0"/></svg>
<svg style="position:absolute;left:882px;top:110px;" width="13" height="13" viewBox="0 0 13 13"><path d="M1 1 L12 12 M12 1 L1 12" stroke="#a8a8a8" stroke-width="1.8"/></svg>
<svg style="position:absolute;left:903px;top:108px;" width="16" height="17" viewBox="0 0 16 17"><path d="M0.5 10.5 H15.5 V16.5 H0.5 Z" fill="none" stroke="#c4c4c4"/><path d="M6 10 L13 2 L15 4 L8 12 Z" fill="#ddd" stroke="#bbb"/><line x1="3" y1="12" x2="3" y2="15" stroke="#bbb"/></svg>
<svg style="position:absolute;left:928px;top:108px;" width="15" height="17" viewBox="0 0 15 17"><path d="M0.5 0.5 H9 L12.5 4 V16.5 H0.5 Z" fill="#fff" stroke="#c4c4c4"/><path d="M5 11 L7.5 14 L14 7" stroke="#bbb" stroke-width="1.2" fill="none"/></svg>
<div class="t" style="left:947px;top:110px;font-size:12px;color:#a0a0a0">Properties</div>
<svg style="position:absolute;left:1007px;top:116px;" width="7" height="4" viewBox="0 0 7 4"><path d="M0 0 H7 L3.5 4 Z" fill="#b0b0b0"/></svg>
<div style="left:1020px;top:106px;width:1px;height:22px;background:#c4c4c4"></div>
<svg style="position:absolute;left:1026px;top:107px;" width="17" height="18" viewBox="0 0 17 18"><path d="M0.5 6.5 H5 L6.5 8 H13.5 V17.5 H0.5 Z" fill="#f2b632"/><rect x="0.5" y="9" width="13" height="8.5" fill="#f8cf55"/><path d="M11 0.5 L12.3 3.8 L16 4 L13.2 6.3 L14.2 9.8 L11 7.8 L7.8 9.8 L8.8 6.3 L6 4 L9.7 3.8 Z" fill="#fff" stroke="#777" stroke-width="0.8"/></svg>
<div class="t" style="left:1048px;top:110px;font-size:12px;">New</div>
<svg style="position:absolute;left:1077px;top:116px;" width="7" height="4" viewBox="0 0 7 4"><path d="M0 0 H7 L3.5 4 Z" fill="#000"/></svg>
<svg style="position:absolute;left:1130px;top:109px;" width="3" height="15" viewBox="0 0 3 15"><rect x="0" y="0" width="3" height="1" fill="#b0b0b0"/><rect x="0" y="2" width="3" height="1" fill="#b0b0b0"/><rect x="0" y="4" width="3" height="1" fill="#b0b0b0"/><rect x="0" y="6" width="3" height="1" fill="#b0b0b0"/><rect x="0" y="8" width="3" height="1" fill="#b0b0b0"/><rect x="0" y="10" width="3" height="1" fill="#b0b0b0"/><rect x="0" y="12" width="3" height="1" fill="#b0b0b0"/><rect x="0" y="14" width="3" height="1" fill="#b0b0b0"/></svg>
<svg style="position:absolute;left:1138px;top:109px;" width="15" height="15" viewBox="0 0 15 15"><rect x="0.5" y="0.5" width="14" height="14" fill="#fff" stroke="#8a8a8a"/><path d="M7.5 3 V12 M3 7.5 H12" stroke="#1c8fd6" stroke-width="2"/></svg>
<svg style="position:absolute;left:1161px;top:109px;" width="15" height="15" viewBox="0 0 15 15"><rect x="0.5" y="0.5" width="14" height="14" fill="#fff" stroke="#c8c8c8"/><path d="M3 7.5 H12" stroke="#d0d0d0" stroke-width="2"/></svg>
<svg style="position:absolute;left:1184px;top:109px;" width="15" height="15" viewBox="0 0 15 15"><rect x="0.5" y="0.5" width="14" height="14" fill="#fff" stroke="#8a8a8a"/><path d="M3 3 H12 L7.5 12 Z" fill="none" stroke="#1c8fd6" stroke-width="1.8"/><path d="M4.5 6 H10.5" stroke="#1c8fd6" stroke-width="1.5"/></svg>
<div style="left:43px;top:130px;width:659px;height:21px;background:#bfcddb"></div>
<div class="t" style="left:48px;top:134px;font-size:12px;">D:\Dev\lks_ASCII\build</div>
<div style="left:707px;top:130px;width:658px;height:21px;background:#99b4d1"></div>
<div class="t" style="left:713px;top:135px;font-size:12px;">/csgo/| *.vpk/</div>
<div style="left:43px;top:151px;width:659px;height:637px;background:#fff;border:1px solid #828790"></div>
<div style="left:194px;top:152px;width:1px;height:635px;background:#eef3f8"></div>
<div style="left:264px;top:152px;width:1px;height:635px;background:#eef3f8"></div>
<div style="left:384px;top:152px;width:1px;height:635px;background:#eef3f8"></div>
<div style="left:534px;top:152px;width:1px;height:635px;background:#eef3f8"></div>
<div class="t" style="left:51px;top:158px;font-size:12px;">Name</div>
<div style="left:46px;top:178px;width:1px;height:609px;background:#dbeaf7"></div>
<svg style="position:absolute;left:51px;top:178px;" width="15" height="16" viewBox="0 0 15 16"><rect x="0.5" y="0.5" width="11" height="15" fill="#fde79f" stroke="#e8c35a"/><path d="M10.5 15.5 V10.5 Q10.5 9 11.5 9 Q12.5 9 12.5 10.5 V15.5 Z" fill="#fde79f" stroke="#e8c35a"/></svg>
<svg style="position:absolute;left:51px;top:178px;" width="15" height="16" viewBox="0 0 15 16"><path d="M3 8.2 L5.7 5 L8.4 8.2 Z" fill="#3c4650"/><path d="M5.7 7.5 V11.8 H10.5" stroke="#3c4650" stroke-width="1.5" fill="none"/></svg>
<div class="t" style="left:67px;top:180px;font-size:12px;">..</div>
<svg style="position:absolute;left:51px;top:197px;" width="15" height="16" viewBox="0 0 15 16"><rect x="0.5" y="0.5" width="11" height="15" fill="#fde79f" stroke="#e8c35a"/><path d="M10.5 15.5 V10.5 Q10.5 9 11.5 9 Q12.5 9 12.5 10.5 V15.5 Z" fill="#fde79f" stroke="#e8c35a"/></svg>
<div class="t" style="left:67px;top:199px;font-size:12px;">configs</div>
<svg style="position:absolute;left:51px;top:216px;" width="15" height="16" viewBox="0 0 15 16"><rect x="0.5" y="0.5" width="11" height="15" fill="#fde79f" stroke="#e8c35a"/><path d="M10.5 15.5 V10.5 Q10.5 9 11.5 9 Q12.5 9 12.5 10.5 V15.5 Z" fill="#fde79f" stroke="#e8c35a"/></svg>
<div class="t" style="left:67px;top:218px;font-size:12px;">lks_ASCII</div>
<svg style="position:absolute;left:51px;top:235px;" width="15" height="16" viewBox="0 0 15 16"><rect x="0.5" y="0.5" width="11" height="15" fill="#fde79f" stroke="#e8c35a"/><path d="M10.5 15.5 V10.5 Q10.5 9 11.5 9 Q12.5 9 12.5 10.5 V15.5 Z" fill="#fde79f" stroke="#e8c35a"/></svg>
<div class="t" style="left:67px;top:237px;font-size:12px;">plugins</div>
<svg style="position:absolute;left:51px;top:254px;" width="15" height="16" viewBox="0 0 15 16"><rect x="0.5" y="0.5" width="11" height="15" fill="#fde79f" stroke="#e8c35a"/><path d="M10.5 15.5 V10.5 Q10.5 9 11.5 9 Q12.5 9 12.5 10.5 V15.5 Z" fill="#fde79f" stroke="#e8c35a"/></svg>
<div class="t" style="left:67px;top:256px;font-size:12px;">vipConverter</div>
<div style="left:707px;top:151px;width:659px;height:323px;background:#fff;border:1px solid #828790"></div>
<div style="left:708px;top:152px;width:640px;height:320px;overflow:hidden">
<svg style="position:absolute;left:6px;top:7px;" width="11" height="7" viewBox="0 0 11 7"><path d="M1 1 L5.5 5 L10 1" fill="none" stroke="#404040" stroke-width="1.7"/></svg>
<div style="left:20px;top:11px;width:1px;height:1px;background:#777"></div>
<div style="left:22px;top:11px;width:1px;height:1px;background:#777"></div>
<svg style="position:absolute;left:25px;top:2px;" width="15" height="16" viewBox="0 0 15 16"><rect x="0.5" y="0.5" width="11" height="15" fill="#fde79f" stroke="#e8c35a"/><path d="M10.5 15.5 V10.5 Q10.5 9 11.5 9 Q12.5 9 12.5 10.5 V15.5 Z" fill="#fde79f" stroke="#e8c35a"/></svg>
<div class="t" style="left:44px;top:3px;font-size:12px;letter-spacing:0.4px">/ &lt;root&gt;</div>
<div style="left:31px;top:19px;width:1px;height:1px;background:#777"></div>
<div style="left:40px;top:19px;width:52px;height:18px;background:#d9d9d9"></div>
<svg style="position:absolute;left:25px;top:25px;" width="11" height="7" viewBox="0 0 11 7"><path d="M1 1 L5.5 5 L10 1" fill="none" stroke="#404040" stroke-width="1.7"/></svg>
<div style="left:39px;top:29px;width:1px;height:1px;background:#777"></div>
<div style="left:41px;top:29px;width:1px;height:1px;background:#777"></div>
<svg style="position:absolute;left:44px;top:20px;" width="15" height="16" viewBox="0 0 15 16"><rect x="0.5" y="0.5" width="11" height="15" fill="#fde79f" stroke="#e8c35a"/><path d="M10.5 15.5 V10.5 Q10.5 9 11.5 9 Q12.5 9 12.5 10.5 V15.5 Z" fill="#fde79f" stroke="#e8c35a"/></svg>
<div class="t" style="left:63px;top:21px;font-size:12px;">csgo</div>
<div style="left:50px;top:37px;width:1px;height:290px;background:repeating-linear-gradient(to bottom,#808080 0 1px,transparent 1px 2px)"></div>
<div style="left:52px;top:47px;width:10px;height:1px;background:repeating-linear-gradient(to right,#808080 0 1px,transparent 1px 2px)"></div>
<svg style="position:absolute;left:63px;top:38px;" width="15" height="16" viewBox="0 0 15 16"><rect x="0.5" y="0.5" width="11" height="15" fill="#fde79f" stroke="#e8c35a"/><path d="M10.5 15.5 V10.5 Q10.5 9 11.5 9 Q12.5 9 12.5 10.5 V15.5 Z" fill="#fde79f" stroke="#e8c35a"/></svg>
<div class="t" style="left:82px;top:39px;font-size:12px;">addons</div>
<div style="left:52px;top:65px;width:10px;height:1px;background:repeating-linear-gradient(to right,#808080 0 1px,transparent 1px 2px)"></div>
<svg style="position:absolute;left:63px;top:56px;" width="15" height="16" viewBox="0 0 15 16"><rect x="0.5" y="0.5" width="11" height="15" fill="#fde79f" stroke="#e8c35a"/><path d="M10.5 15.5 V10.5 Q10.5 9 11.5 9 Q12.5 9 12.5 10.5 V15.5 Z" fill="#fde79f" stroke="#e8c35a"/></svg>
<div class="t" style="left:82px;top:57px;font-size:12px;">bin</div>
<div style="left:52px;top:83px;width:10px;height:1px;background:repeating-linear-gradient(to right,#808080 0 1px,transparent 1px 2px)"></div>
<svg style="position:absolute;left:63px;top:74px;" width="15" height="16" viewBox="0 0 15 16"><rect x="0.5" y="0.5" width="11" height="15" fill="#fde79f" stroke="#e8c35a"/><path d="M10.5 15.5 V10.5 Q10.5 9 11.5 9 Q12.5 9 12.5 10.5 V15.5 Z" fill="#fde79f" stroke="#e8c35a"/></svg>
<div class="t" style="left:82px;top:75px;font-size:12px;">cfg</div>
<div style="left:52px;top:101px;width:10px;height:1px;background:repeating-linear-gradient(to right,#808080 0 1px,transparent 1px 2px)"></div>
<svg style="position:absolute;left:63px;top:92px;" width="15" height="16" viewBox="0 0 15 16"><rect x="0.5" y="0.5" width="11" height="15" fill="#fde79f" stroke="#e8c35a"/><path d="M10.5 15.5 V10.5 Q10.5 9 11.5 9 Q12.5 9 12.5 10.5 V15.5 Z" fill="#fde79f" stroke="#e8c35a"/></svg>
<div class="t" style="left:82px;top:93px;font-size:12px;">CRASH</div>
<div style="left:52px;top:119px;width:10px;height:1px;background:repeating-linear-gradient(to right,#808080 0 1px,transparent 1px 2px)"></div>
<svg style="position:absolute;left:63px;top:110px;" width="15" height="16" viewBox="0 0 15 16"><rect x="0.5" y="0.5" width="11" height="15" fill="#fde79f" stroke="#e8c35a"/><path d="M10.5 15.5 V10.5 Q10.5 9 11.5 9 Q12.5 9 12.5 10.5 V15.5 Z" fill="#fde79f" stroke="#e8c35a"/></svg>
<div class="t" style="left:82px;top:111px;font-size:12px;">maps</div>
<div style="left:52px;top:137px;width:10px;height:1px;background:repeating-linear-gradient(to right,#808080 0 1px,transparent 1px 2px)"></div>
<svg style="position:absolute;left:63px;top:128px;" width="15" height="16" viewBox="0 0 15 16"><rect x="0.5" y="0.5" width="11" height="15" fill="#fde79f" stroke="#e8c35a"/><path d="M10.5 15.5 V10.5 Q10.5 9 11.5 9 Q12.5 9 12.5 10.5 V15.5 Z" fill="#fde79f" stroke="#e8c35a"/></svg>
<svg style="position:absolute;left:61px;top:134px;" width="9" height="9" viewBox="0 0 9 9"><rect x="0.5" y="0.5" width="8" height="8" fill="#fff" stroke="#8c8c8c"/><path d="M2.5 7 Q2.5 4 5.5 3.5 M4 2.5 H6.5 V5" stroke="#5a5a5a" stroke-width="1.3" fill="none"/></svg>
<div class="t" style="left:82px;top:129px;font-size:12px;">pak01_000.vpk</div>
<div style="left:52px;top:155px;width:10px;height:1px;background:repeating-linear-gradient(to right,#808080 0 1px,transparent 1px 2px)"></div>
<svg style="position:absolute;left:63px;top:146px;" width="15" height="16" viewBox="0 0 15 16"><rect x="0.5" y="0.5" width="11" height="15" fill="#fde79f" stroke="#e8c35a"/><path d="M10.5 15.5 V10.5 Q10.5 9 11.5 9 Q12.5 9 12.5 10.5 V15.5 Z" fill="#fde79f" stroke="#e8c35a"/></svg>
<svg style="position:absolute;left:61px;top:152px;" width="9" height="9" viewBox="0 0 9 9"><rect x="0.5" y="0.5" width="8" height="8" fill="#fff" stroke="#8c8c8c"/><path d="M2.5 7 Q2.5 4 5.5 3.5 M4 2.5 H6.5 V5" stroke="#5a5a5a" stroke-width="1.3" fill="none"/></svg>
<div class="t" style="left:82px;top:147px;font-size:12px;">pak01_001.vpk</div>
<div style="left:52px;top:173px;width:10px;height:1px;background:repeating-linear-gradient(to right,#808080 0 1px,transparent 1px 2px)"></div>
<svg style="position:absolute;left:63px;top:164px;" width="15" height="16" viewBox="0 0 15 16"><rect x="0.5" y="0.5" width="11" height="15" fill="#fde79f" stroke="#e8c35a"/><path d="M10.5 15.5 V10.5 Q10.5 9 11.5 9 Q12.5 9 12.5 10.5 V15.5 Z" fill="#fde79f" stroke="#e8c35a"/></svg>
<svg style="position:absolute;left:61px;top:170px;" width="9" height="9" viewBox="0 0 9 9"><rect x="0.5" y="0.5" width="8" height="8" fill="#fff" stroke="#8c8c8c"/><path d="M2.5 7 Q2.5 4 5.5 3.5 M4 2.5 H6.5 V5" stroke="#5a5a5a" stroke-width="1.3" fill="none"/></svg>
<div class="t" style="left:82px;top:165px;font-size:12px;">pak01_002.vpk</div>
<div style="left:52px;top:191px;width:10px;height:1px;background:repeating-linear-gradient(to right,#808080 0 1px,transparent 1px 2px)"></div>
<svg style="position:absolute;left:63px;top:182px;" width="15" height="16" viewBox="0 0 15 16"><rect x="0.5" y="0.5" width="11" height="15" fill="#fde79f" stroke="#e8c35a"/><path d="M10.5 15.5 V10.5 Q10.5 9 11.5 9 Q12.5 9 12.5 10.5 V15.5 Z" fill="#fde79f" stroke="#e8c35a"/></svg>
<svg style="position:absolute;left:61px;top:188px;" width="9" height="9" viewBox="0 0 9 9"><rect x="0.5" y="0.5" width="8" height="8" fill="#fff" stroke="#8c8c8c"/><path d="M2.5 7 Q2.5 4 5.5 3.5 M4 2.5 H6.5 V5" stroke="#5a5a5a" stroke-width="1.3" fill="none"/></svg>
<div class="t" style="left:82px;top:183px;font-size:12px;">pak01_003.vpk</div>
<div style="left:52px;top:209px;width:10px;height:1px;background:repeating-linear-gradient(to right,#808080 0 1px,transparent 1px 2px)"></div>
<svg style="position:absolute;left:63px;top:200px;" width="15" height="16" viewBox="0 0 15 16"><rect x="0.5" y="0.5" width="11" height="15" fill="#fde79f" stroke="#e8c35a"/><path d="M10.5 15.5 V10.5 Q10.5 9 11.5 9 Q12.5 9 12.5 10.5 V15.5 Z" fill="#fde79f" stroke="#e8c35a"/></svg>
<svg style="position:absolute;left:61px;top:206px;" width="9" height="9" viewBox="0 0 9 9"><rect x="0.5" y="0.5" width="8" height="8" fill="#fff" stroke="#8c8c8c"/><path d="M2.5 7 Q2.5 4 5.5 3.5 M4 2.5 H6.5 V5" stroke="#5a5a5a" stroke-width="1.3" fill="none"/></svg>
<div class="t" style="left:82px;top:201px;font-size:12px;">pak01_004.vpk</div>
<div style="left:52px;top:227px;width:10px;height:1px;background:repeating-linear-gradient(to right,#808080 0 1px,transparent 1px 2px)"></div>
<svg style="position:absolute;left:63px;top:218px;" width="15" height="16" viewBox="0 0 15 16"><rect x="0.5" y="0.5" width="11" height="15" fill="#fde79f" stroke="#e8c35a"/><path d="M10.5 15.5 V10.5 Q10.5 9 11.5 9 Q12.5 9 12.5 10.5 V15.5 Z" fill="#fde79f" stroke="#e8c35a"/></svg>
<svg style="position:absolute;left:61px;top:224px;" width="9" height="9" viewBox="0 0 9 9"><rect x="0.5" y="0.5" width="8" height="8" fill="#fff" stroke="#8c8c8c"/><path d="M2.5 7 Q2.5 4 5.5 3.5 M4 2.5 H6.5 V5" stroke="#5a5a5a" stroke-width="1.3" fill="none"/></svg>
<div class="t" style="left:82px;top:219px;font-size:12px;">pak01_005.vpk</div>
<div style="left:52px;top:245px;width:10px;height:1px;background:repeating-linear-gradient(to right,#808080 0 1px,transparent 1px 2px)"></div>
<svg style="position:absolute;left:63px;top:236px;" width="15" height="16" viewBox="0 0 15 16"><rect x="0.5" y="0.5" width="11" height="15" fill="#fde79f" stroke="#e8c35a"/><path d="M10.5 15.5 V10.5 Q10.5 9 11.5 9 Q12.5 9 12.5 10.5 V15.5 Z" fill="#fde79f" stroke="#e8c35a"/></svg>
<svg style="position:absolute;left:61px;top:242px;" width="9" height="9" viewBox="0 0 9 9"><rect x="0.5" y="0.5" width="8" height="8" fill="#fff" stroke="#8c8c8c"/><path d="M2.5 7 Q2.5 4 5.5 3.5 M4 2.5 H6.5 V5" stroke="#5a5a5a" stroke-width="1.3" fill="none"/></svg>
<div class="t" style="left:82px;top:237px;font-size:12px;">pak01_006.vpk</div>
<div style="left:52px;top:263px;width:10px;height:1px;background:repeating-linear-gradient(to right,#808080 0 1px,transparent 1px 2px)"></div>
<svg style="position:absolute;left:63px;top:254px;" width="15" height="16" viewBox="0 0 15 16"><rect x="0.5" y="0.5" width="11" height="15" fill="#fde79f" stroke="#e8c35a"/><path d="M10.5 15.5 V10.5 Q10.5 9 11.5 9 Q12.5 9 12.5 10.5 V15.5 Z" fill="#fde79f" stroke="#e8c35a"/></svg>
<svg style="position:absolute;left:61px;top:260px;" width="9" height="9" viewBox="0 0 9 9"><rect x="0.5" y="0.5" width="8" height="8" fill="#fff" stroke="#8c8c8c"/><path d="M2.5 7 Q2.5 4 5.5 3.5 M4 2.5 H6.5 V5" stroke="#5a5a5a" stroke-width="1.3" fill="none"/></svg>
<div class="t" style="left:82px;top:255px;font-size:12px;">pak01_007.vpk</div>
<div style="left:52px;top:281px;width:10px;height:1px;background:repeating-linear-gradient(to right,#808080 0 1px,transparent 1px 2px)"></div>
<svg style="position:absolute;left:63px;top:272px;" width="15" height="16" viewBox="0 0 15 16"><rect x="0.5" y="0.5" width="11" height="15" fill="#fde79f" stroke="#e8c35a"/><path d="M10.5 15.5 V10.5 Q10.5 9 11.5 9 Q12.5 9 12.5 10.5 V15.5 Z" fill="#fde79f" stroke="#e8c35a"/></svg>
<svg style="position:absolute;left:61px;top:278px;" width="9" height="9" viewBox="0 0 9 9"><rect x="0.5" y="0.5" width="8" height="8" fill="#fff" stroke="#8c8c8c"/><path d="M2.5 7 Q2.5 4 5.5 3.5 M4 2.5 H6.5 V5" stroke="#5a5a5a" stroke-width="1.3" fill="none"/></svg>
<div class="t" style="left:82px;top:273px;font-size:12px;">pak01_008.vpk</div>
<div style="left:52px;top:299px;width:10px;height:1px;background:repeating-linear-gradient(to right,#808080 0 1px,transparent 1px 2px)"></div>
<svg style="position:absolute;left:63px;top:290px;" width="15" height="16" viewBox="0 0 15 16"><rect x="0.5" y="0.5" width="11" height="15" fill="#fde79f" stroke="#e8c35a"/><path d="M10.5 15.5 V10.5 Q10.5 9 11.5 9 Q12.5 9 12.5 10.5 V15.5 Z" fill="#fde79f" stroke="#e8c35a"/></svg>
<svg style="position:absolute;left:61px;top:296px;" width="9" height="9" viewBox="0 0 9 9"><rect x="0.5" y="0.5" width="8" height="8" fill="#fff" stroke="#8c8c8c"/><path d="M2.5 7 Q2.5 4 5.5 3.5 M4 2.5 H6.5 V5" stroke="#5a5a5a" stroke-width="1.3" fill="none"/></svg>
<div class="t" style="left:82px;top:291px;font-size:12px;">pak01_009.vpk</div>
<div style="left:52px;top:317px;width:10px;height:1px;background:repeating-linear-gradient(to right,#808080 0 1px,transparent 1px 2px)"></div>
<svg style="position:absolute;left:63px;top:308px;" width="15" height="16" viewBox="0 0 15 16"><rect x="0.5" y="0.5" width="11" height="15" fill="#fde79f" stroke="#e8c35a"/><path d="M10.5 15.5 V10.5 Q10.5 9 11.5 9 Q12.5 9 12.5 10.5 V15.5 Z" fill="#fde79f" stroke="#e8c35a"/></svg>
<svg style="position:absolute;left:61px;top:314px;" width="9" height="9" viewBox="0 0 9 9"><rect x="0.5" y="0.5" width="8" height="8" fill="#fff" stroke="#8c8c8c"/><path d="M2.5 7 Q2.5 4 5.5 3.5 M4 2.5 H6.5 V5" stroke="#5a5a5a" stroke-width="1.3" fill="none"/></svg>
<div class="t" style="left:82px;top:309px;font-size:12px;">pak01_010.vpk</div>
</div>
<div style="left:1348px;top:153px;width:16px;height:319px;background:#f0f0f0"></div>
<div style="left:1348px;top:170px;width:16px;height:17px;background:#cdcdcd"></div>
<svg style="position:absolute;left:1351px;top:158px;" width="10" height="7" viewBox="0 0 10 7"><path d="M1 5 L5.0 1 L9 5" fill="none" stroke="#505050" stroke-width="1.8"/></svg>
<svg style="position:absolute;left:1351px;top:460px;" width="10" height="7" viewBox="0 0 10 7"><path d="M1 1 L5.0 5 L9 1" fill="none" stroke="#505050" stroke-width="1.8"/></svg>
<div style="left:759px;top:276px;width:190px;height:195px;border:3px solid #f00;border-radius:3px"></div>
<div style="left:707px;top:477px;width:659px;height:311px;background:#fff;border:1px solid #828790"></div>
<div style="left:973px;top:478px;width:1px;height:25px;background:#e5e5e5"></div>
<div style="left:973px;top:503px;width:1px;height:284px;background:#eef3f8"></div>
<div style="left:1043px;top:478px;width:1px;height:25px;background:#e5e5e5"></div>
<div style="left:1043px;top:503px;width:1px;height:284px;background:#eef3f8"></div>
<div style="left:1193px;top:478px;width:1px;height:25px;background:#e5e5e5"></div>
<div style="left:1193px;top:503px;width:1px;height:284px;background:#eef3f8"></div>
<div style="left:1272px;top:478px;width:1px;height:25px;background:#e5e5e5"></div>
<div style="left:1272px;top:503px;width:1px;height:284px;background:#eef3f8"></div>
<div style="left:1334px;top:478px;width:1px;height:25px;background:#e5e5e5"></div>
<div style="left:1334px;top:503px;width:1px;height:284px;background:#eef3f8"></div>
<div class="t" style="left:716px;top:484px;font-size:12px;">Name</div>
<svg style="position:absolute;left:837px;top:478px;" width="10" height="6" viewBox="0 0 10 6"><path d="M1 4 L5.0 1 L9 4" fill="none" stroke="#606060" stroke-width="1.1"/></svg>
<div class="t" style="left:960px;top:484px;width:78px;text-align:right">Size</div>
<div class="t" style="left:1050px;top:484px;font-size:12px;">Changed</div>
<div class="t" style="left:1200px;top:484px;font-size:12px;">Rights</div>
<div class="t" style="left:1279px;top:484px;font-size:12px;">Owner</div>
<div style="left:710px;top:503px;width:1px;height:284px;background:#dbeaf7"></div>
<div style="left:708px;top:503px;width:640px;height:284px;overflow:hidden">
<svg style="position:absolute;left:7px;top:1px;" width="15" height="16" viewBox="0 0 15 16"><rect x="0.5" y="0.5" width="11" height="15" fill="#fde79f" stroke="#e8c35a"/><path d="M10.5 15.5 V10.5 Q10.5 9 11.5 9 Q12.5 9 12.5 10.5 V15.5 Z" fill="#fde79f" stroke="#e8c35a"/></svg>
<svg style="position:absolute;left:7px;top:1px;" width="15" height="16" viewBox="0 0 15 16"><path d="M3 8.2 L5.7 5 L8.4 8.2 Z" fill="#3c4650"/><path d="M5.7 7.5 V11.8 H10.5" stroke="#3c4650" stroke-width="1.5" fill="none"/></svg>
<div class="t" style="left:23px;top:3px;font-size:12px;">..</div>
<svg style="position:absolute;left:7px;top:20px;" width="15" height="16" viewBox="0 0 15 16"><rect x="0.5" y="0.5" width="11" height="15" fill="#fde79f" stroke="#e8c35a"/><path d="M10.5 15.5 V10.5 Q10.5 9 11.5 9 Q12.5 9 12.5 10.5 V15.5 Z" fill="#fde79f" stroke="#e8c35a"/></svg>
<div class="t" style="left:23px;top:22px;font-size:12px;">addons</div>
<div class="t" style="left:342px;top:22px;font-size:12px;;letter-spacing:-0.6px">20.02.2024 00:34</div>
<div class="t" style="left:492px;top:22px;font-size:12px;;letter-spacing:0.15px">rwxr-xr-x</div>
<div class="t" style="left:571px;top:22px;font-size:12px;">server8...</div>
<svg style="position:absolute;left:7px;top:39px;" width="15" height="16" viewBox="0 0 15 16"><rect x="0.5" y="0.5" width="11" height="15" fill="#fde79f" stroke="#e8c35a"/><path d="M10.5 15.5 V10.5 Q10.5 9 11.5 9 Q12.5 9 12.5 10.5 V15.5 Z" fill="#fde79f" stroke="#e8c35a"/></svg>
<div class="t" style="left:23px;top:41px;font-size:12px;">bin</div>
<div class="t" style="left:342px;top:41px;font-size:12px;;letter-spacing:-0.6px">17.02.2024 03:21</div>
<div class="t" style="left:492px;top:41px;font-size:12px;;letter-spacing:0.15px">rwxr-xr-x</div>
<div class="t" style="left:571px;top:41px;font-size:12px;">server8...</div>
<svg style="position:absolute;left:7px;top:58px;" width="15" height="16" viewBox="0 0 15 16"><rect x="0.5" y="0.5" width="11" height="15" fill="#fde79f" stroke="#e8c35a"/><path d="M10.5 15.5 V10.5 Q10.5 9 11.5 9 Q12.5 9 12.5 10.5 V15.5 Z" fill="#fde79f" stroke="#e8c35a"/></svg>
<div class="t" style="left:23px;top:60px;font-size:12px;">cfg</div>
<div class="t" style="left:342px;top:60px;font-size:12px;;letter-spacing:-0.6px">17.02.2024 03:21</div>
<div class="t" style="left:492px;top:60px;font-size:12px;;letter-spacing:0.15px">rwxrwxrwx</div>
<div class="t" style="left:571px;top:60px;font-size:12px;">server8...</div>
<svg style="position:absolute;left:7px;top:77px;" width="15" height="16" viewBox="0 0 15 16"><rect x="0.5" y="0.5" width="11" height="15" fill="#fde79f" stroke="#e8c35a"/><path d="M10.5 15.5 V10.5 Q10.5 9 11.5 9 Q12.5 9 12.5 10.5 V15.5 Z" fill="#fde79f" stroke="#e8c35a"/></svg>
<div class="t" style="left:23px;top:79px;font-size:12px;">CRASH</div>
<div class="t" style="left:342px;top:79px;font-size:12px;;letter-spacing:-0.6px">25.02.2024 22:04</div>
<div class="t" style="left:492px;top:79px;font-size:12px;;letter-spacing:0.15px">rwxr-xr-x</div>
<div class="t" style="left:571px;top:79px;font-size:12px;">server8...</div>
<svg style="position:absolute;left:7px;top:96px;" width="15" height="16" viewBox="0 0 15 16"><rect x="0.5" y="0.5" width="11" height="15" fill="#fde79f" stroke="#e8c35a"/><path d="M10.5 15.5 V10.5 Q10.5 9 11.5 9 Q12.5 9 12.5 10.5 V15.5 Z" fill="#fde79f" stroke="#e8c35a"/></svg>
<div class="t" style="left:23px;top:98px;font-size:12px;">maps</div>
<div class="t" style="left:342px;top:98px;font-size:12px;;letter-spacing:-0.6px">17.02.2024 03:24</div>
<div class="t" style="left:492px;top:98px;font-size:12px;;letter-spacing:0.15px">rwxrwxrwx</div>
<div class="t" style="left:571px;top:98px;font-size:12px;">server8...</div>
<svg style="position:absolute;left:7px;top:115px;" width="15" height="16" viewBox="0 0 15 16"><rect x="0.5" y="0.5" width="11" height="15" fill="#fde79f" stroke="#e8c35a"/><path d="M10.5 15.5 V10.5 Q10.5 9 11.5 9 Q12.5 9 12.5 10.5 V15.5 Z" fill="#fde79f" stroke="#e8c35a"/></svg>
<div class="t" style="left:23px;top:117px;font-size:12px;">panorama</div>
<div class="t" style="left:342px;top:117px;font-size:12px;;letter-spacing:-0.6px">28.09.2023 21:22</div>
<div class="t" style="left:492px;top:117px;font-size:12px;;letter-spacing:0.15px">rwxrwxrwx</div>
<div class="t" style="left:571px;top:117px;font-size:12px;">server8...</div>
<svg style="position:absolute;left:7px;top:134px;" width="15" height="16" viewBox="0 0 15 16"><rect x="0.5" y="0.5" width="11" height="15" fill="#fde79f" stroke="#e8c35a"/><path d="M10.5 15.5 V10.5 Q10.5 9 11.5 9 Q12.5 9 12.5 10.5 V15.5 Z" fill="#fde79f" stroke="#e8c35a"/></svg>
<div class="t" style="left:23px;top:136px;font-size:12px;">resource</div>
<div class="t" style="left:342px;top:136px;font-size:12px;;letter-spacing:-0.6px">14.12.2023 03:41</div>
<div class="t" style="left:492px;top:136px;font-size:12px;;letter-spacing:0.15px">rwxrwxrwx</div>
<div class="t" style="left:571px;top:136px;font-size:12px;">server8...</div>
<svg style="position:absolute;left:7px;top:153px;" width="15" height="16" viewBox="0 0 15 16"><rect x="0.5" y="0.5" width="11" height="15" fill="#fde79f" stroke="#e8c35a"/><path d="M10.5 15.5 V10.5 Q10.5 9 11.5 9 Q12.5 9 12.5 10.5 V15.5 Z" fill="#fde79f" stroke="#e8c35a"/></svg>
<div class="t" style="left:23px;top:155px;font-size:12px;">rpt</div>
<div class="t" style="left:342px;top:155px;font-size:12px;;letter-spacing:-0.6px">26.02.2024 00:00</div>
<div class="t" style="left:492px;top:155px;font-size:12px;;letter-spacing:0.15px">rwxrwxrwx</div>
<div class="t" style="left:571px;top:155px;font-size:12px;">server8...</div>
<svg style="position:absolute;left:7px;top:172px;" width="15" height="16" viewBox="0 0 15 16"><rect x="0.5" y="0.5" width="11" height="15" fill="#fde79f" stroke="#e8c35a"/><path d="M10.5 15.5 V10.5 Q10.5 9 11.5 9 Q12.5 9 12.5 10.5 V15.5 Z" fill="#fde79f" stroke="#e8c35a"/></svg>
<div class="t" style="left:23px;top:174px;font-size:12px;">save</div>
<div class="t" style="left:342px;top:174px;font-size:12px;;letter-spacing:-0.6px">29.09.2023 15:02</div>
<div class="t" style="left:492px;top:174px;font-size:12px;;letter-spacing:0.15px">rwxrwxrwx</div>
<div class="t" style="left:571px;top:174px;font-size:12px;">server8...</div>
<svg style="position:absolute;left:7px;top:191px;" width="15" height="16" viewBox="0 0 15 16"><rect x="0.5" y="0.5" width="11" height="15" fill="#fde79f" stroke="#e8c35a"/><path d="M10.5 15.5 V10.5 Q10.5 9 11.5 9 Q12.5 9 12.5 10.5 V15.5 Z" fill="#fde79f" stroke="#e8c35a"/></svg>
<div class="t" style="left:23px;top:193px;font-size:12px;">scripts</div>
<div class="t" style="left:342px;top:193px;font-size:12px;;letter-spacing:-0.6px">14.02.2024 04:13</div>
<div class="t" style="left:492px;top:193px;font-size:12px;;letter-spacing:0.15px">rwxr-xr-x</div>
<div class="t" style="left:571px;top:193px;font-size:12px;">server8...</div>
<svg style="position:absolute;left:7px;top:210px;" width="15" height="16" viewBox="0 0 15 16"><rect x="0.5" y="0.5" width="11" height="15" fill="#fde79f" stroke="#e8c35a"/><path d="M10.5 15.5 V10.5 Q10.5 9 11.5 9 Q12.5 9 12.5 10.5 V15.5 Z" fill="#fde79f" stroke="#e8c35a"/></svg>
<svg style="position:absolute;left:5px;top:217px;" width="9" height="9" viewBox="0 0 9 9"><rect x="0.5" y="0.5" width="8" height="8" fill="#fff" stroke="#8c8c8c"/><path d="M2.5 7 Q2.5 4 5.5 3.5 M4 2.5 H6.5 V5" stroke="#5a5a5a" stroke-width="1.3" fill="none"/></svg>
<div class="t" style="left:23px;top:212px;font-size:12px;">steam.inf</div>
<div class="t" style="left:342px;top:212px;font-size:12px;;letter-spacing:-0.6px">17.02.2024 03:24</div>
<div class="t" style="left:492px;top:212px;font-size:12px;;letter-spacing:0.15px">rwxrwxrwx</div>
<div class="t" style="left:571px;top:212px;font-size:12px;">server8...</div>
<svg style="position:absolute;left:7px;top:229px;" width="12" height="16" viewBox="0 0 12 16"><path d="M0.5 0.5 H8.5 L11.5 3.5 V15.5 H0.5 Z" fill="#fff" stroke="#8a8a8a"/><line x1="2" y1="3.5" x2="10" y2="3.5" stroke="#9a9a9a"/><line x1="2" y1="5.5" x2="10" y2="5.5" stroke="#9a9a9a"/><line x1="2" y1="7.5" x2="10" y2="7.5" stroke="#9a9a9a"/><line x1="2" y1="9.5" x2="10" y2="9.5" stroke="#9a9a9a"/><line x1="2" y1="11.5" x2="10" y2="11.5" stroke="#9a9a9a"/><line x1="2" y1="13.5" x2="10" y2="13.5" stroke="#9a9a9a"/></svg>
<div class="t" style="left:23px;top:231px;font-size:12px;color:#6d6d6d">.in.gamemodes_server.txt.</div>
<div class="t" style="left:222px;top:231px;width:108px;text-align:right;color:#6d6d6d">0 KB</div>
<div class="t" style="left:342px;top:231px;font-size:12px;color:#6d6d6d;letter-spacing:-0.6px">20.02.2024 19:41</div>
<div class="t" style="left:492px;top:231px;font-size:12px;color:#6d6d6d;letter-spacing:0.15px">rw-r--r--</div>
<div class="t" style="left:571px;top:231px;font-size:12px;color:#6d6d6d">server8...</div>
<svg style="position:absolute;left:7px;top:248px;" width="12" height="16" viewBox="0 0 12 16"><path d="M0.5 0.5 H8.5 L11.5 3.5 V15.5 H0.5 Z" fill="#fff" stroke="#8a8a8a"/><line x1="2" y1="3.5" x2="10" y2="3.5" stroke="#9a9a9a"/><line x1="2" y1="5.5" x2="10" y2="5.5" stroke="#9a9a9a"/><line x1="2" y1="7.5" x2="10" y2="7.5" stroke="#9a9a9a"/><line x1="2" y1="9.5" x2="10" y2="9.5" stroke="#9a9a9a"/><line x1="2" y1="11.5" x2="10" y2="11.5" stroke="#9a9a9a"/><line x1="2" y1="13.5" x2="10" y2="13.5" stroke="#9a9a9a"/></svg>
<div class="t" style="left:23px;top:250px;font-size:12px;">backup_round00.txt</div>
<div class="t" style="left:222px;top:250px;width:108px;text-align:right;">4 KB</div>
<div class="t" style="left:342px;top:250px;font-size:12px;;letter-spacing:-0.6px">26.02.2024 22:36</div>
<div class="t" style="left:492px;top:250px;font-size:12px;;letter-spacing:0.15px">rw-r--r--</div>
<div class="t" style="left:571px;top:250px;font-size:12px;">server8...</div>
<svg style="position:absolute;left:7px;top:267px;" width="12" height="16" viewBox="0 0 12 16"><path d="M0.5 0.5 H8.5 L11.5 3.5 V15.5 H0.5 Z" fill="#fff" stroke="#8a8a8a"/><line x1="2" y1="3.5" x2="10" y2="3.5" stroke="#9a9a9a"/><line x1="2" y1="5.5" x2="10" y2="5.5" stroke="#9a9a9a"/><line x1="2" y1="7.5" x2="10" y2="7.5" stroke="#9a9a9a"/><line x1="2" y1="9.5" x2="10" y2="9.5" stroke="#9a9a9a"/><line x1="2" y1="11.5" x2="10" y2="11.5" stroke="#9a9a9a"/><line x1="2" y1="13.5" x2="10" y2="13.5" stroke="#9a9a9a"/></svg>
<div class="t" style="left:23px;top:269px;font-size:12px;">backup_round01.txt</div>
<div class="t" style="left:222px;top:269px;width:108px;text-align:right;">4 KB</div>
<div class="t" style="left:342px;top:269px;font-size:12px;;letter-spacing:-0.6px">26.02.2024 22:37</div>
<div class="t" style="left:492px;top:269px;font-size:12px;;letter-spacing:0.15px">rw-r--r--</div>
<div class="t" style="left:571px;top:269px;font-size:12px;">server8...</div>
</div>
<div style="left:1348px;top:478px;width:16px;height:309px;background:#f0f0f0"></div>
<div style="left:1348px;top:496px;width:16px;height:46px;background:#cdcdcd"></div>
<svg style="position:absolute;left:1351px;top:484px;" width="10" height="7" viewBox="0 0 10 7"><path d="M1 5 L5.0 1 L9 5" fill="none" stroke="#505050" stroke-width="1.8"/></svg>
<svg style="position:absolute;left:1351px;top:776px;" width="10" height="7" viewBox="0 0 10 7"><path d="M1 1 L5.0 5 L9 1" fill="none" stroke="#505050" stroke-width="1.8"/></svg>
<div style="left:708px;top:522px;width:379px;height:233px;border:3px solid #f00;border-radius:3px"></div>
<div class="t" style="left:46px;top:793px;font-size:12px;">0 B of 0 B in 0 of 4</div>
<div class="t" style="left:710px;top:793px;font-size:12px;">0 B of 572 KB in 0 of 82</div>
<div class="t" style="left:1200px;top:793px;width:162px;text-align:right">275 filtered</div>
<div style="left:43px;top:809px;width:1322px;height:1px;background:#a0a0a0"></div>
<div style="left:43px;top:813px;width:1322px;height:20px;background:#bfcddb"></div>
<div class="t" style="left:48px;top:817px;font-size:12px;">Queue</div>
<div style="left:45px;top:836px;width:23px;height:22px;background:#e3eef9;border:1px solid #1979ca"></div>
<svg style="position:absolute;left:48px;top:838px;" width="16" height="17" viewBox="0 0 16 17"><path d="M7.5 0.5 H12 L14.5 3 V10.5 H7.5 Z" fill="#fff" stroke="#8a8a8a"/><path d="M4.5 3.5 H9 L11.5 6 V13 H4.5 Z" fill="#fff" stroke="#8a8a8a"/><path d="M0.5 7.5 H5.5 L8 10 V15.5 H0.5 Z" fill="#fff" stroke="#8a8a8a"/><line x1="2" y1="11.5" x2="6" y2="11.5" stroke="#8a8a8a"/><line x1="2" y1="13.5" x2="6" y2="13.5" stroke="#8a8a8a"/><line x1="9" y1="6.5" x2="13" y2="6.5" stroke="#aaa"/><line x1="9" y1="8.5" x2="13" y2="8.5" stroke="#aaa"/><path d="M8 6.5 L15.5 11.5 L8 16.5 Z" fill="#3fb52a"/></svg>
<div style="left:71px;top:836px;width:1px;height:22px;background:#c4c4c4"></div>
<svg style="position:absolute;left:81px;top:841px;" width="10" height="12" viewBox="0 0 10 12"><path d="M0 0 L10 6 L0 12 Z" fill="#b8b8b8"/></svg>
<svg style="position:absolute;left:101px;top:840px;" width="14" height="14" viewBox="0 0 14 14"><path d="M1 1 L13 13 M13 1 L1 13" stroke="#a8a8a8" stroke-width="1.8"/></svg>
<div style="left:123px;top:836px;width:1px;height:22px;background:#c4c4c4"></div>
<svg style="position:absolute;left:132px;top:840px;" width="10" height="14" viewBox="0 0 10 14"><path d="M5 0 L10 5 H6.5 V14 H3.5 V5 H0 Z" fill="#c4c4c4"/></svg>
<svg style="position:absolute;left:154px;top:840px;" width="10" height="14" viewBox="0 0 10 14"><path d="M5 14 L10 9 H6.5 V0 H3.5 V9 H0 Z" fill="#c4c4c4"/></svg>
<div style="left:175px;top:836px;width:1px;height:22px;background:#c4c4c4"></div>
<svg style="position:absolute;left:181px;top:838px;" width="17" height="17" viewBox="0 0 17 17"><path d="M7.5 0.5 H12 L14.5 3 V10.5 H7.5 Z" fill="#fff" stroke="#c4c4c4"/><path d="M4.5 3.5 H9 L11.5 6 V13 H4.5 Z" fill="#fff" stroke="#c4c4c4"/><path d="M0.5 7.5 H5.5 L8 10 V15.5 H0.5 Z" fill="#fff" stroke="#c4c4c4"/><line x1="2" y1="11.5" x2="6" y2="11.5" stroke="#c4c4c4"/><line x1="2" y1="13.5" x2="6" y2="13.5" stroke="#c4c4c4"/><line x1="9" y1="6.5" x2="13" y2="6.5" stroke="#d0d0d0"/><line x1="9" y1="8.5" x2="13" y2="8.5" stroke="#d0d0d0"/><circle cx="12" cy="12.5" r="4" fill="#f0f0f0" stroke="#c4c4c4" stroke-width="1.3"/><path d="M12 10 V13 H13.5" stroke="#c4c4c4" fill="none"/></svg>
<svg style="position:absolute;left:202px;top:846px;" width="7" height="4" viewBox="0 0 7 4"><path d="M0 0 H7 L3.5 4 Z" fill="#a0a0a0"/></svg>
<svg style="position:absolute;left:216px;top:838px;" width="16" height="16" viewBox="0 0 16 16"><defs><linearGradient id="gg2" x1="0" y1="0" x2="0" y2="1"><stop offset="0" stop-color="#fcd45a"/><stop offset="1" stop-color="#eeaa1c"/></linearGradient></defs><g fill="url(#gg2)"><circle cx="8" cy="8" r="5.6"/><rect x="6.5" y="0.3" width="3" height="4" rx="1" transform="rotate(0 8 8)"/><rect x="6.5" y="0.3" width="3" height="4" rx="1" transform="rotate(45 8 8)"/><rect x="6.5" y="0.3" width="3" height="4" rx="1" transform="rotate(90 8 8)"/><rect x="6.5" y="0.3" width="3" height="4" rx="1" transform="rotate(135 8 8)"/><rect x="6.5" y="0.3" width="3" height="4" rx="1" transform="rotate(180 8 8)"/><rect x="6.5" y="0.3" width="3" height="4" rx="1" transform="rotate(225 8 8)"/><rect x="6.5" y="0.3" width="3" height="4" rx="1" transform="rotate(270 8 8)"/><rect x="6.5" y="0.3" width="3" height="4" rx="1" transform="rotate(315 8 8)"/></g><circle cx="8" cy="8" r="2.8" fill="#fff"/></svg>
<div style="left:43px;top:860px;width:1323px;height:74px;background:#fff;border:1px solid #828790;border-left:none"></div>
<div style="left:114px;top:862px;width:1px;height:24px;background:#e5e5e5"></div>
<div style="left:364px;top:862px;width:1px;height:24px;background:#e5e5e5"></div>
<div style="left:694px;top:862px;width:1px;height:24px;background:#e5e5e5"></div>
<div style="left:774px;top:862px;width:1px;height:24px;background:#e5e5e5"></div>
<div style="left:854px;top:862px;width:1px;height:24px;background:#e5e5e5"></div>
<div style="left:953px;top:862px;width:1px;height:24px;background:#e5e5e5"></div>
<div class="t" style="left:52px;top:867px;font-size:12px;">Operation</div>
<div class="t" style="left:121px;top:867px;font-size:12px;">Source</div>
<div class="t" style="left:371px;top:867px;font-size:12px;">Destination</div>
<div class="t" style="left:600px;top:867px;width:88px;text-align:right">Transferred</div>
<div class="t" style="left:700px;top:867px;width:69px;text-align:right">Time</div>
<div class="t" style="left:780px;top:867px;width:69px;text-align:right">Speed</div>
<div class="t" style="left:882px;top:867px;font-size:12px;">Progress</div>
<div style="left:43px;top:937px;width:1323px;height:22px;background:#fff;border:1px solid #828790;border-left:none;border-bottom:none"></div>
<div style="left:107px;top:111px;width:427px;height:527px;background:#f0f0f0;border:1px solid #5a5a5a;box-shadow:2px 4px 20px rgba(0,0,0,0.36)"></div>
<div style="left:108px;top:112px;width:425px;height:25px;background:#fff"></div>
<div class="t" style="left:112px;top:117px;font-size:12px;letter-spacing:-0.15px">Edit file mask</div>
<div class="t" style="left:462px;top:117px;font-size:14px;-webkit-text-stroke:0.35px #000;transform:scaleX(0.8);transform-origin:left">?</div>
<svg style="position:absolute;left:505px;top:119px;" width="11" height="11" viewBox="0 0 11 11"><path d="M0.5 0.5 L10 10 M10 0.5 L0.5 10" stroke="#111" stroke-width="1.05"/></svg>
<div style="left:116px;top:150px;width:409px;height:171px;border:1px solid #dcdcdc"></div>
<div class="t" style="left:123px;top:143px;background:#f0f0f0;padding:0 1px;letter-spacing:-0.7px">Files masks</div>
<div class="t" style="left:132px;top:162px;font-size:12px;letter-spacing:-0.5px">Include files:</div>
<div style="left:132px;top:178px;width:181px;height:129px;background:#fff;border:1px solid #0078d7"></div>
<div style="left:295px;top:180px;width:16px;height:125px;background:#f0f0f0"></div>
<svg style="position:absolute;left:299px;top:186px;" width="9" height="6" viewBox="0 0 9 6"><path d="M1 4 L4.5 1 L8 4" fill="none" stroke="#c2c2c2" stroke-width="1.5"/></svg>
<svg style="position:absolute;left:299px;top:293px;" width="9" height="6" viewBox="0 0 9 6"><path d="M1 1 L4.5 4 L8 1" fill="none" stroke="#c2c2c2" stroke-width="1.5"/></svg>
<div class="t" style="left:328px;top:162px;font-size:12px;letter-spacing:-0.5px">Exclude files:</div>
<div style="left:328px;top:178px;width:181px;height:129px;background:#fff;border:1px solid #7a7a7a"></div>
<div style="left:491px;top:180px;width:16px;height:125px;background:#f0f0f0"></div>
<svg style="position:absolute;left:495px;top:186px;" width="9" height="6" viewBox="0 0 9 6"><path d="M1 4 L4.5 1 L8 4" fill="none" stroke="#c2c2c2" stroke-width="1.5"/></svg>
<svg style="position:absolute;left:495px;top:293px;" width="9" height="6" viewBox="0 0 9 6"><path d="M1 1 L4.5 4 L8 1" fill="none" stroke="#c2c2c2" stroke-width="1.5"/></svg>
<div style="left:116px;top:334px;width:409px;height:165px;border:1px solid #dcdcdc"></div>
<div class="t" style="left:123px;top:328px;background:#f0f0f0;padding:0 1px;letter-spacing:-0.75px">Directories masks</div>
<div class="t" style="left:132px;top:348px;font-size:12px;letter-spacing:-0.45px">Include directories:</div>
<div style="left:132px;top:363px;width:181px;height:104px;background:#fff;border:1px solid #7a7a7a"></div>
<div style="left:295px;top:365px;width:16px;height:100px;background:#f0f0f0"></div>
<svg style="position:absolute;left:299px;top:371px;" width="9" height="6" viewBox="0 0 9 6"><path d="M1 4 L4.5 1 L8 4" fill="none" stroke="#c2c2c2" stroke-width="1.5"/></svg>
<svg style="position:absolute;left:299px;top:453px;" width="9" height="6" viewBox="0 0 9 6"><path d="M1 1 L4.5 4 L8 1" fill="none" stroke="#c2c2c2" stroke-width="1.5"/></svg>
<div class="t" style="left:328px;top:348px;font-size:12px;letter-spacing:-0.6px">Exclude directories:</div>
<div style="left:328px;top:363px;width:181px;height:104px;background:#fff;border:1px solid #7a7a7a"></div>
<div style="left:491px;top:365px;width:16px;height:100px;background:#f0f0f0"></div>
<svg style="position:absolute;left:495px;top:371px;" width="9" height="6" viewBox="0 0 9 6"><path d="M1 4 L4.5 1 L8 4" fill="none" stroke="#c2c2c2" stroke-width="1.5"/></svg>
<svg style="position:absolute;left:495px;top:453px;" width="9" height="6" viewBox="0 0 9 6"><path d="M1 1 L4.5 4 L8 1" fill="none" stroke="#c2c2c2" stroke-width="1.5"/></svg>
<div class="t" style="left:334px;top:366px;font-size:12px;">*.vpk</div>
<div style="left:328px;top:475px;width:13px;height:13px;background:#fff;border:1px solid #333"></div>
<div class="t" style="left:344px;top:476px;font-size:12px;letter-spacing:-0.52px">All (do not recurse)</div>
<div class="t" style="left:400px;top:506px;width:125px;text-align:right">mask hints</div>
<div style="left:475px;top:518px;width:50px;height:1px;background:repeating-linear-gradient(to right,#000 0 2px,transparent 2px 4px)"></div>
<div style="left:116px;top:528px;width:409px;height:69px;border:1px solid #dcdcdc"></div>
<div class="t" style="left:123px;top:522px;background:#f0f0f0;padding:0 1px;letter-spacing:-0.9px">Mask</div>
<div class="t" style="left:127px;top:537px;font-size:12px;letter-spacing:0">| *.vpk/</div>
<div style="left:501px;top:534px;width:1px;height:56px;background:#fff"></div>
<svg style="position:absolute;left:505px;top:543px;" width="9" height="6" viewBox="0 0 9 6"><path d="M1 4 L4.5 1 L8 4" fill="none" stroke="#c2c2c2" stroke-width="1.5"/></svg>
<svg style="position:absolute;left:505px;top:578px;" width="9" height="6" viewBox="0 0 9 6"><path d="M1 1 L4.5 4 L8 1" fill="none" stroke="#c2c2c2" stroke-width="1.5"/></svg>
<div style="left:198px;top:605px;width:73px;height:23px;background:#e1e1e1;border:1px solid #adadad"></div>
<div class="t" style="left:198px;top:610px;width:73px;text-align:center">Clear</div>
<div style="left:283px;top:605px;width:73px;height:23px;background:#e1e1e1;border:2px solid #0078d7"></div>
<div class="t" style="left:283px;top:610px;width:73px;text-align:center">OK</div>
<div style="left:368px;top:605px;width:73px;height:23px;background:#e1e1e1;border:1px solid #adadad"></div>
<div class="t" style="left:368px;top:610px;width:73px;text-align:center">Cancel</div>
<div style="left:451px;top:605px;width:73px;height:23px;background:#e1e1e1;border:1px solid #adadad"></div>
<div class="t" style="left:451px;top:610px;width:73px;text-align:center">Help</div>
<div style="left:318px;top:353px;width:58px;height:33px;border:3px solid #f00;border-radius:3px"></div>
</body></html>
